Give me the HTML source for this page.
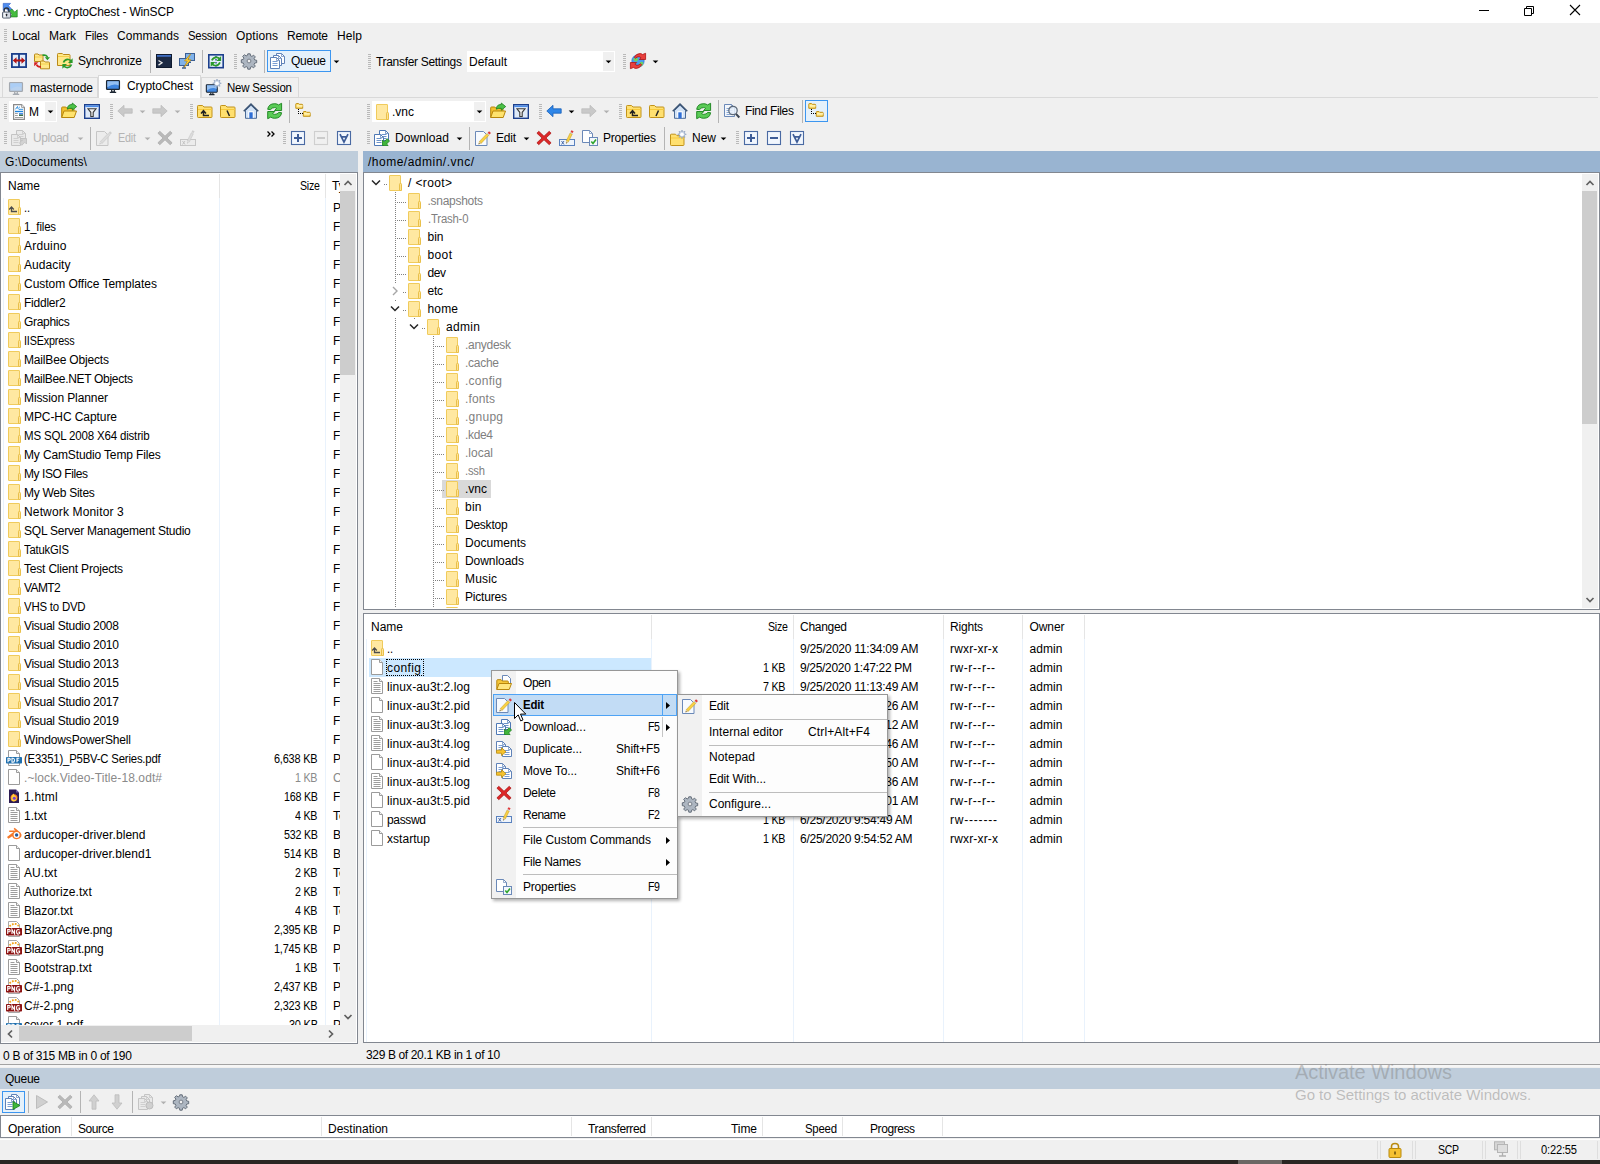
<!DOCTYPE html>
<html lang="en"><head><meta charset="utf-8"><title>.vnc - CryptoChest - WinSCP</title><style>html,body{margin:0;padding:0}body{width:1600px;height:1164px;position:relative;overflow:hidden;background:#f0f0f0;font-family:"Liberation Sans", sans-serif;font-size:12px;color:#000}div,span,svg{position:absolute}span{white-space:pre}svg{overflow:visible}</style></head>
<body>
<div style="left:0px;top:0px;width:1600px;height:23px;background:#fff;"></div>
<svg style="left:2px;top:3px" width="16" height="16" viewBox="0 0 17 17"><path d="M1.300 .4h7.700L6.800 2.900l4.200 4.200-2.800 2.800L4 5.700 1.300 8z" fill="#4d8df0" stroke="#2b5cc4" stroke-width=".7" stroke-linejoin="round"/><path d="M16.200 14.800V7.200l-2.600 2.500-3.300-3.300-2.800 2.800 3.300 3.300-2.500 2.300z" fill="#45bd3e" stroke="#1b7f1d" stroke-width=".7" stroke-linejoin="round"/><path d="M2.300 10V8q0-2.700 2.500-2.700T7.300 8v2" fill="none" stroke="#2d3440" stroke-width="1.500"/><rect x=".5" y="9.600" width="8.600" height="6.400" rx="1" fill="#d3d9e2" stroke="#4e5868"/><path d="M2 10.500h2v4.800h-2z" fill="#fff" opacity=".7"/><rect x="4.200" y="11.300" width="1.300" height="2.800" rx=".6" fill="#20242c"/></svg>
<span style="top:3.8px;line-height:16px;left:23px;letter-spacing:-0.17px;">.vnc - CryptoChest - WinSCP</span>
<svg style="left:1470px;top:0" width="130" height="23" viewBox="0 0 130 23"><path d="M9 10.500h10" stroke="#000" fill="none"/><path d="M54.500 8.500h7v7h-7zM56.500 8.500v-2h7v7h-2" stroke="#000" fill="none"/><path d="M100 5l10 10M110 5l-10 10" stroke="#000" fill="none" stroke-width="1.100"/></svg>
<div style="left:4px;top:29px;width:3px;height:14px;background:repeating-linear-gradient(#b9b9b9 0 1px,transparent 1px 2px)"></div>
<span style="top:27.8px;line-height:16px;left:12px;letter-spacing:-0.17px;">Local</span>
<span style="top:27.8px;line-height:16px;left:49px;letter-spacing:0.11px;">Mark</span>
<span style="top:27.8px;line-height:16px;left:85px;letter-spacing:-0.19px;transform:scaleX(0.9356);transform-origin:0 0;">Files</span>
<span style="top:27.8px;line-height:16px;left:117px;letter-spacing:0.09px;">Commands</span>
<span style="top:27.8px;line-height:16px;left:188px;letter-spacing:-0.21px;transform:scaleX(0.9415);transform-origin:0 0;">Session</span>
<span style="top:27.8px;line-height:16px;left:236px;letter-spacing:0.11px;">Options</span>
<span style="top:27.8px;line-height:16px;left:287px;letter-spacing:-0.21px;">Remote</span>
<span style="top:27.8px;line-height:16px;left:337px;letter-spacing:0.1px;">Help</span>
<div style="left:4px;top:54px;width:3px;height:16px;background:repeating-linear-gradient(#b9b9b9 0 1px,transparent 1px 2px)"></div>
<svg style="left:11px;top:53px" width="16" height="16" viewBox="0 0 16 16"><rect x=".9" y=".9" width="14.200" height="13.200" fill="#e2edfa" stroke="#1c3f8c" stroke-width="1.800"/><path d="M8 1v13" stroke="#1c3f8c" stroke-width="1.800"/><path d="M1.800 7.500l3.700-3.200v2.200h5V4.300l3.700 3.200-3.700 3.200V8.500h-5v2.200z" fill="#b31515"/></svg>
<svg style="left:34px;top:53px" width="16" height="16" viewBox="0 0 16 16"><path d="M0.5 1.8q0-.8.8-.8h2.7l1 1h3.2q.8 0 .8.800v5.7h-8.5z" fill="#ffe88a" stroke="#b9891a"/><path d="M1.0 4.0h7.5" stroke="#f6cf4a"/><path d="M6.5 8.8q0-.8.8-.8h2.9l1 1h3.5q.8 0 .8.800v6.000000000000001h-9z" fill="#ffe88a" stroke="#b9891a"/><path d="M7.0 11.0h8" stroke="#f6cf4a"/><path d="M8.500 2.200q4.500-.8 5 2.500" fill="none" stroke="#2a9a2a" stroke-width="1.700"/><path d="M10.800 4.200h5.200l-2.600 3z" fill="#2a9a2a"/><path d="M7 13.800q-3.500.4-4.500-2.300" fill="none" stroke="#d42020" stroke-width="1.700"/><path d="M.2 13.300V9.200h4.300z" fill="#d42020"/></svg>
<svg style="left:57px;top:53px" width="16" height="16" viewBox="0 0 16 16"><path d="M0.5 1.3q0-.8.8-.8h4.0l1 1h5.9q.8 0 .8.800v10.2h-12.5z" fill="#ffe88a" stroke="#b9891a"/><path d="M1.0 3.5h11.5" stroke="#f6cf4a"/><g transform="translate(5,5)"><path d="M1.500 4.500q1.500-3.500 5-3 1.800.3 2.800 1.700" fill="none" stroke="#2a9a2a" stroke-width="1.700"/><path d="M10.600 .2v4.800H6z" fill="#2a9a2a"/><path d="M9.500 6.500q-1.500 3.500-5 3-1.800-.3-2.800-1.700" fill="none" stroke="#2a9a2a" stroke-width="1.700"/><path d="M.4 10.800V6h4.600z" fill="#2a9a2a"/></g></svg>
<span style="top:53.1px;line-height:16px;left:78px;letter-spacing:-0.2px;">Synchronize</span>
<div style="left:150px;top:50px;width:1px;height:23px;background:#b4b4b4;"></div>
<svg style="left:156px;top:53px" width="16" height="16" viewBox="0 0 16 16"><rect x=".5" y="1.500" width="15" height="13" fill="#1c2a44" stroke="#0f1a2e"/><rect x="1" y="2" width="14" height="1.800" fill="#3e6cc0"/><path d="M2.500 7.500l3.500 2.300-3.500 2.300" fill="none" stroke="#e8e8e8" stroke-width="1.300"/></svg>
<svg style="left:179px;top:53px" width="16" height="16" viewBox="0 0 16 16"><rect x="6.500" y=".5" width="9" height="7" fill="#7fb2ea" stroke="#3b5f94"/><path d="M10 9.500h2M11 7.500v2" stroke="#3b5f94"/><rect x=".5" y="5.500" width="9" height="7" fill="#7fb2ea" stroke="#3b5f94"/><path d="M3 15h4M5 12.500v2.500" stroke="#3b5f94" stroke-width="1.300"/><path d="M11.500 1L5.500 8h2.800L5 14.500 12 6.800H9z" fill="#ffd23b" stroke="#b98a0e" stroke-width=".7"/></svg>
<div style="left:202px;top:50px;width:1px;height:23px;background:#b4b4b4;"></div>
<svg style="left:208px;top:53px" width="16" height="16" viewBox="0 0 16 16"><rect x=".8" y="1.800" width="14.400" height="12.900" fill="#e4eefa" stroke="#1c3f8c" stroke-width="1.600"/><path d="M8 3v11" stroke="#1c3f8c" stroke-dasharray="1.500 1.500" stroke-width="1.300"/><g transform="translate(2.300,2.800) scale(1.020)"><path d="M1.500 4.500q1.500-3.500 5-3 1.800.3 2.800 1.700" fill="none" stroke="#2a9a2a" stroke-width="1.700"/><path d="M10.600 .2v4.800H6z" fill="#2a9a2a"/><path d="M9.500 6.500q-1.500 3.500-5 3-1.800-.3-2.800-1.700" fill="none" stroke="#2a9a2a" stroke-width="1.700"/><path d="M.4 10.800V6h4.600z" fill="#2a9a2a"/></g></svg>
<div style="left:234px;top:54px;width:3px;height:16px;background:repeating-linear-gradient(#b9b9b9 0 1px,transparent 1px 2px)"></div>
<svg style="left:241px;top:53px" width="16" height="16" viewBox="0 0 16 16"><path d="M6.800.8h2.400l.4 2 1.300.6 1.700-1.200 1.700 1.700-1.200 1.700.6 1.300 2 .4v2.400l-2 .4-.6 1.300 1.200 1.700-1.700 1.700-1.700-1.200-1.300.6-.4 2H6.800l-.4-2-1.300-.6-1.700 1.200-1.700-1.700 1.200-1.700-.6-1.300-2-.4V6.800l2-.4.6-1.300L1.700 3.400l1.700-1.700 1.700 1.200 1.300-.6z" fill="#adb6c1" stroke="#59636f" stroke-width=".9"/><circle cx="8" cy="8" r="1.900" fill="#f0f0f0" stroke="#6d7580" stroke-width=".9"/></svg>
<div style="left:264px;top:50px;width:1px;height:23px;background:#b4b4b4;"></div>
<div style="left:267px;top:50px;width:64px;height:22px;background:#e5f1fb;border:1px solid #3c96f0;box-sizing:border-box;"></div>
<svg style="left:270px;top:53px" width="16" height="16" viewBox="0 0 16 16"><path d="M6.5 0.5h5l3 3v7h-8z" fill="#fff" stroke="#5f82b8"/><path d="M11.5 0.5v3h3" fill="none" stroke="#5f82b8" stroke-width=".7"/><path d="M3.5 2.5h5l3 3v7h-8z" fill="#fff" stroke="#5f82b8"/><path d="M8.5 2.5v3h3" fill="none" stroke="#5f82b8" stroke-width=".7"/><path d="M0.5 4.5h6l3 3v8h-9z" fill="#fff" stroke="#5f82b8"/><path d="M6.5 4.5v3h3" fill="none" stroke="#5f82b8" stroke-width=".7"/><path d="M2.5 8.5h5M2.5 10.5h5M2.5 12.5h5" stroke="#7c9fd3" fill="none"/></svg>
<span style="top:53.1px;line-height:16px;left:291px;letter-spacing:-0.26px;">Queue</span>
<svg style="left:333px;top:60px" width="7" height="4" viewBox="0 0 7 4"><path d="M.7 .4h5.600L3.500 3.300z" fill="#000"/></svg>
<div style="left:368px;top:54px;width:3px;height:16px;background:repeating-linear-gradient(#b9b9b9 0 1px,transparent 1px 2px)"></div>
<span style="top:53.8px;line-height:16px;left:376px;letter-spacing:-0.31px;">Transfer Settings</span>
<div style="left:467px;top:51px;width:148px;height:21px;background:#fff;"></div>
<div style="left:603px;top:52px;width:11px;height:19px;background:#f0f0f0;"></div>
<span style="top:53.8px;line-height:16px;left:469px;letter-spacing:-0.01px;">Default</span>
<svg style="left:605px;top:60px" width="7" height="4" viewBox="0 0 7 4"><path d="M.7 .4h5.600L3.500 3.300z" fill="#000"/></svg>
<div style="left:623px;top:54px;width:3px;height:16px;background:repeating-linear-gradient(#b9b9b9 0 1px,transparent 1px 2px)"></div>
<svg style="left:630px;top:53px" width="16" height="16" viewBox="0 0 16 16"><circle cx="8" cy="8" r="6.200" fill="#4a9cf0" stroke="#2a6fc4" stroke-width=".6"/><path d="M3 6.500q1.500-2.500 3.500-2t1.500 2.500-3 1.500zM9.500 9.500q2.500-1.500 3.500 0t-1 3.300-2.500-1z" fill="#6fd060"/><path d="M4.300 4.300Q6.300 .5 10 .6q1.400 0 2.600.9L15.600 .3V6.500H9.300l1.700-1.700Q10 3.700 8.800 3.700 6.800 3.700 5.600 5.300z" fill="#e8403c" stroke="#b01313" stroke-width=".8" stroke-linejoin="round"/><path d="M4.300 4.300Q6.300 .5 10 .6q1.400 0 2.600.9L15.600 .3V6.500H9.300l1.700-1.700Q10 3.700 8.800 3.700 6.800 3.700 5.600 5.300z" fill="#e8403c" stroke="#b01313" stroke-width=".8" stroke-linejoin="round" transform="rotate(180 8 8)"/></svg>
<svg style="left:652px;top:60px" width="7" height="4" viewBox="0 0 7 4"><path d="M.7 .4h5.600L3.500 3.300z" fill="#000"/></svg>
<div style="left:0px;top:97px;width:1598px;height:1px;background:#d9d9d9;"></div>
<div style="left:2px;top:77px;width:96px;height:21px;background:#f0f0f0;border:1px solid #d9d9d9;box-sizing:border-box;border-bottom:none;height:20px;"></div>
<svg style="left:8px;top:80px" width="16" height="16" viewBox="0 0 16 16"><g opacity="1"><rect x="1.600" y="2.600" width="12.800" height="8.800" rx=".7" fill="#b9d2ef" stroke="#a4a9b0" stroke-width="1.300"/><path d="M2.300 3.300h11.400v4.200q-5.400-2.600-11.400 1.800z" fill="#a9cdf6" opacity=".8"/><path d="M6.700 12v1.800h2.600V12M4.800 14.300h6.400" stroke="#a4a9b0" stroke-width="1.300" fill="none"/></g></svg>
<span style="top:79.8px;line-height:16px;left:30px;letter-spacing:-0.04px;">masternode</span>
<div style="left:201px;top:77px;width:98px;height:20px;background:#f0f0f0;border:1px solid #d9d9d9;box-sizing:border-box;border-bottom:none;"></div>
<svg style="left:205px;top:80px" width="16" height="16" viewBox="0 0 16 16"><g transform="translate(0,2.500) scale(.85)"><g opacity="1"><rect x="1.600" y="2.600" width="12.800" height="8.800" rx=".7" fill="#3f86e0" stroke="#1d2733" stroke-width="1.300"/><path d="M2.300 3.300h11.400v4.200q-5.400-2.600-11.400 1.800z" fill="#a9cdf6" opacity=".8"/><path d="M6.700 12v1.800h2.600V12M4.800 14.300h6.400" stroke="#1d2733" stroke-width="1.300" fill="none"/></g></g><path d="M12 -1l.8 2.200 2.200-.9-.9 2.200 2.200.8-2.200.8.900 2.200-2.200-.9L12 7.600l-.8-2.200-2.200.9.900-2.200L7.700 3.300l2.200-.8-.9-2.200 2.200.9z" fill="#dfe8f5" stroke="#7d93b5" stroke-width=".6"/><circle cx="12" cy="3.300" r="1.600" fill="#fff"/></svg>
<span style="top:79.8px;line-height:16px;left:227px;letter-spacing:-0.21px;transform:scaleX(0.9569);transform-origin:0 0;">New Session</span>
<div style="left:98px;top:75px;width:103px;height:23px;background:#fff;border:1px solid #d9d9d9;box-sizing:border-box;border-bottom:none;"></div>
<svg style="left:105px;top:78px" width="16" height="16" viewBox="0 0 16 16"><g opacity="1"><rect x="1.600" y="2.600" width="12.800" height="8.800" rx=".7" fill="#3f86e0" stroke="#1d2733" stroke-width="1.300"/><path d="M2.300 3.300h11.400v4.200q-5.400-2.600-11.400 1.800z" fill="#a9cdf6" opacity=".8"/><path d="M6.700 12v1.800h2.600V12M4.800 14.300h6.400" stroke="#1d2733" stroke-width="1.300" fill="none"/></g></svg>
<span style="top:77.8px;line-height:16px;left:127px;letter-spacing:-0.07px;">CryptoChest</span>
<div style="left:4px;top:104px;width:3px;height:16px;background:repeating-linear-gradient(#b9b9b9 0 1px,transparent 1px 2px)"></div>
<div style="left:9px;top:101px;width:48px;height:21px;background:#fff;"></div>
<div style="left:45px;top:102px;width:11px;height:19px;background:#f0f0f0;"></div>
<svg style="left:13px;top:104px" width="12" height="16" viewBox="0 0 12 16"><path d="M.6 .6h8l2.800 2.800v12H.6z" fill="#fff" stroke="#8a8a8a" stroke-width="1.200"/><path d="M8.600 .6v2.800h2.800" fill="#f4f4f4" stroke="#8a8a8a" stroke-width=".8"/><path d="M2.500 5.300L4.500 2.500l.8 2.800M6 3.200h.8M6 5.300h4" stroke="#2f8fe0" stroke-width="1" fill="none"/><path d="M2 7.500h8" stroke="#1f83dc" stroke-width="1.400"/><path d="M2 9.500h2.800M2 11.500h2.800M2 13.500h8" stroke="#a0a0a0"/><rect x="6" y="9" width="4" height="1.500" fill="#4a8df0"/><rect x="6" y="10.500" width="4" height="1.500" fill="#3a6e4a"/></svg>
<span style="top:103.8px;line-height:16px;left:29px;">M</span>
<svg style="left:47px;top:110px" width="7" height="4" viewBox="0 0 7 4"><path d="M.7 .4h5.600L3.500 3.300z" fill="#000"/></svg>
<svg style="left:61px;top:103px" width="16" height="16" viewBox="0 0 16 16"><path d="M.7 14.500V4.800q0-.8.8-.8h3.300l1.200 1.300h6.200q.8 0 .8.800V8" fill="#f2c12e" stroke="#b8860b"/><path d="M.7 14.500L3 8h12.500l-2.300 6.500z" fill="#ffe36e" stroke="#b8860b"/><path d="M6.300 6.200Q6.500 1.300 11.300 1.500V0l4.400 3.600-4.400 3.600V5.300Q8 5 6.300 6.200z" fill="#4cc148" stroke="#1b7f1d" stroke-width=".8" stroke-linejoin="round"/></svg>
<svg style="left:84px;top:103px" width="16" height="16" viewBox="0 0 16 16"><rect x=".7" y="1.700" width="14.600" height="13.600" fill="#dfeaf8" stroke="#1c3f8c" stroke-width="1.400"/><rect x="1.400" y="2.400" width="13.200" height="2" fill="#4a8ae6"/><rect x="1.400" y="4.400" width="13.200" height="1" fill="#f4f8fd"/><path d="M4 5.800h8L9.200 9.300v4.200H6.800V9.300z" fill="#f2f2f2" stroke="#3a3a3a" stroke-width="1.100"/></svg>
<div style="left:110px;top:104px;width:3px;height:16px;background:repeating-linear-gradient(#b9b9b9 0 1px,transparent 1px 2px)"></div>
<svg style="left:117px;top:103px" width="16" height="16" viewBox="0 0 16 16"><path d="M.8 8L7 2.300V5.800h8.200v4.400H7v3.500z" fill="#c9c9c9" stroke="#bdbdbd" stroke-width=".8"/></svg>
<svg style="left:139px;top:110px" width="7" height="4" viewBox="0 0 7 4"><path d="M.7 .4h5.600L3.500 3.300z" fill="#b0b0b0"/></svg>
<svg style="left:152px;top:103px" width="16" height="16" viewBox="0 0 16 16"><g transform="translate(16,0) scale(-1,1)"><path d="M.8 8L7 2.300V5.800h8.200v4.400H7v3.500z" fill="#c9c9c9" stroke="#bdbdbd" stroke-width=".8"/></g></svg>
<svg style="left:174px;top:110px" width="7" height="4" viewBox="0 0 7 4"><path d="M.7 .4h5.600L3.500 3.300z" fill="#b0b0b0"/></svg>
<div style="left:190px;top:104px;width:3px;height:16px;background:repeating-linear-gradient(#b9b9b9 0 1px,transparent 1px 2px)"></div>
<svg style="left:197px;top:103px" width="16" height="16" viewBox="0 0 16 16"><path d="M.5 3.300q0-.8.8-.8h4.200l1.500 1.500h7.200q.8 0 .8.800v8.900q0 .800-.8.800H1.300q-.8 0-.8-.8z" fill="#ffe070" stroke="#c2931a"/><path d="M1 6.500h14" stroke="#f7c93a"/><path d="M6.500 8.300v4.200h5.500M4 10.500l2.500-2.800 2.500 2.800" fill="none" stroke="#222" stroke-width="1.500"/></svg>
<svg style="left:220px;top:103px" width="16" height="16" viewBox="0 0 16 16"><path d="M.5 3.300q0-.8.8-.8h4.200l1.500 1.500h7.200q.8 0 .8.800v8.900q0 .800-.8.800H1.300q-.8 0-.8-.8z" fill="#ffe070" stroke="#c2931a"/><path d="M1 6.500h14" stroke="#f7c93a"/><path d="M7 7.500l2.500 5.500" stroke="#222" stroke-width="1.500"/></svg>
<svg style="left:243px;top:103px" width="16" height="16" viewBox="0 0 16 16"><path d="M2.500 7.500v7.800h11V7.500L8 2.200z" fill="#d3e3f6" stroke="#4a6a97"/><path d="M8 .1L.2 7.700l1.100 1.100L8 2.300l6.700 6.500 1.100-1.100z" fill="#3d5574"/><rect x="5.300" y="8.300" width="5.400" height="6.500" fill="#fff"/><rect x="6.300" y="9.300" width="3.400" height="6" fill="#2f6fd6"/></svg>
<svg style="left:267px;top:103px" width="16" height="16" viewBox="0 0 16 16"><path d="M.700 6.300Q1.400 .7 7.800 .7q2.200 0 3.700 1.200L14.600 .3V7.500H7.500l2.100-2.200Q8.800 4.600 7.600 4.600 4.900 4.600 3.500 6.600z" fill="#5acb56" stroke="#16811a" stroke-width=".9" stroke-linejoin="round"/><path d="M.700 6.300Q1.400 .7 7.800 .7q2.200 0 3.700 1.200L14.600 .3V7.500H7.500l2.100-2.200Q8.800 4.600 7.600 4.600 4.900 4.600 3.500 6.600z" fill="#5acb56" stroke="#16811a" stroke-width=".9" stroke-linejoin="round" transform="rotate(180 7.650 8)"/></svg>
<div style="left:289px;top:100px;width:1px;height:23px;background:#b4b4b4;"></div>
<svg style="left:295px;top:103px" width="16" height="16" viewBox="0 0 16 16"><g transform="translate(0,-1)"><path d="M.8 2.200q0-.7.700-.7h2l.8.800h2.700q.7 0 .7.700V6.300H.8z" fill="#ffe070" stroke="#c2931a"/><path d="M8.300 10.200q0-.7.700-.7h2l.8.800h2.700q.7 0 .7.700v3.300H8.300z" fill="#ffe070" stroke="#c2931a"/><path d="M1.600 3.800h6.100M9.100 11.800h6.100" stroke="#fff6c4" stroke-width="1.200"/><path d="M3 7h1v1h-1zM3 9h1v1h-1zM3 11h1v1h-1zM5 11h1v1h-1zM7 11h1v1h-1z" fill="#000"/></g></svg>
<div style="left:4px;top:131px;width:3px;height:14px;background:repeating-linear-gradient(#b9b9b9 0 1px,transparent 1px 2px)"></div>
<svg style="left:11px;top:130px" width="16" height="16" viewBox="0 0 16 16"><path d="M5.5 0.5h6l3 3v7h-9z" fill="#e9e9e9" stroke="#c4c4c4"/><path d="M11.5 0.5v3h3" fill="none" stroke="#c4c4c4" stroke-width=".7"/><path d="M7.5 4.5h5M7.5 6.5h5M7.5 8.5h5" stroke="#cfcfcf" fill="none"/><path d="M0.5 4.5h6l3 3v8h-9z" fill="#e9e9e9" stroke="#c4c4c4"/><path d="M6.5 4.5v3h3" fill="none" stroke="#c4c4c4" stroke-width=".7"/><path d="M2.5 8.5h5M2.5 10.5h5M2.5 12.5h5" stroke="#cfcfcf" fill="none"/><path d="M15.500 8.500v5.500l-1.700-1.700-3 3-2.300-2.300 3-3-1.700-1.500z" fill="#d2d2d2" stroke="#bdbdbd" stroke-width=".8" stroke-linejoin="round"/></svg>
<span style="top:129.8px;line-height:16px;left:33px;color:#b4b4b4;letter-spacing:-0.41px;">Upload</span>
<svg style="left:77px;top:137px" width="7" height="4" viewBox="0 0 7 4"><path d="M.7 .4h5.600L3.500 3.300z" fill="#b0b0b0"/></svg>
<div style="left:90px;top:127px;width:1px;height:23px;background:#b4b4b4;"></div>
<svg style="left:96px;top:130px" width="16" height="16" viewBox="0 0 16 16"><path d="M.5 1.500h8l3.500 3.500v10.500h-11.500z" fill="#ececec" stroke="#c6c6c6"/><path d="M6.33 13.21L13.88 5.27L11.99 3.48L4.45 11.42z" fill="#dcdcdc" stroke="#c2c2c2" stroke-width=".5"/><path d="M3.60 14.20L6.33 13.21L4.45 11.42z" fill="#e6e6e6" stroke="#c2c2c2" stroke-width=".3"/><path d="M3.60 14.20L4.75 13.78L3.96 13.03z" fill="#bdbdbd"/><path d="M13.88 5.27L14.57 4.55L12.68 2.75L11.99 3.48z" fill="#d6d6d6"/><path d="M14.57 4.55L15.94 3.10L14.06 1.30L12.68 2.75z" fill="#cfcfcf"/></svg>
<span style="top:129.8px;line-height:16px;left:118px;color:#b4b4b4;letter-spacing:-0.21px;transform:scaleX(0.897);transform-origin:0 0;">Edit</span>
<svg style="left:144px;top:137px" width="7" height="4" viewBox="0 0 7 4"><path d="M.7 .4h5.600L3.500 3.300z" fill="#b0b0b0"/></svg>
<svg style="left:157px;top:130px" width="16" height="16" viewBox="0 0 16 16"><path d="M2.800 1.300L8 6.200l5.200-4.900 1.900 1.900L10 8l5.100 4.800-1.900 1.900L8 9.800l-5.200 4.900-1.900-1.900L6 8 .9 3.200z" fill="#b9b9b9" stroke="#b0b0b0" stroke-width=".9"/></svg>
<svg style="left:180px;top:130px" width="16" height="16" viewBox="0 0 16 16"><rect x=".5" y="9.500" width="15" height="6" fill="#ececec" stroke="#c6c6c6"/><path d="M2.500 11l2.500 3.500M5 11l-2.500 3.500" stroke="#c0c0c0" stroke-width=".9"/><path d="M9.52 11.69L13.26 4.02L11.11 2.97L7.36 10.64z" fill="#dcdcdc" stroke="#c2c2c2" stroke-width=".5"/><path d="M7.30 13.50L9.52 11.69L7.36 10.64z" fill="#e6e6e6" stroke="#c2c2c2" stroke-width=".3"/><path d="M7.30 13.50L8.24 12.73L7.33 12.29z" fill="#bdbdbd"/><path d="M13.26 4.02L13.70 3.12L11.54 2.07L11.11 2.97z" fill="#d6d6d6"/><path d="M13.70 3.12L14.58 1.33L12.42 0.27L11.54 2.07z" fill="#cfcfcf"/></svg>
<svg style="left:267px;top:131px" width="9" height="6" viewBox="0 0 9 6"><path d="M.5 .5l2.500 2.500-2.500 2.500M4.500 .5l2.500 2.500-2.500 2.500" fill="none" stroke="#000" stroke-width="1.300"/></svg>
<div style="left:283px;top:131px;width:3px;height:14px;background:repeating-linear-gradient(#b9b9b9 0 1px,transparent 1px 2px)"></div>
<svg style="left:291px;top:131px" width="14" height="14" viewBox="0 0 14 14"><rect x=".5" y=".5" width="13" height="13" fill="#f1f6fd" stroke="#4a6aa3" stroke-width="1.100"/><path d="M3 7h8M7 3v8" stroke="#3d5c97" stroke-width="2"/></svg>
<svg style="left:314px;top:131px" width="14" height="14" viewBox="0 0 14 14"><rect x=".5" y=".5" width="13" height="13" fill="#f0f0f0" stroke="#cfcfcf" stroke-width="1.100"/><path d="M3 7h8" stroke="#cbcbcb" stroke-width="2"/></svg>
<svg style="left:337px;top:131px" width="14" height="14" viewBox="0 0 14 14"><rect x=".5" y=".5" width="13" height="13" fill="#f1f6fd" stroke="#4a6aa3" stroke-width="1.100"/><path d="M3 3.200l4 8 4-8M4.300 5.800h5.400" fill="none" stroke="#3d5c97" stroke-width="1.700"/></svg>
<div style="left:367px;top:104px;width:3px;height:16px;background:repeating-linear-gradient(#b9b9b9 0 1px,transparent 1px 2px)"></div>
<div style="left:372px;top:101px;width:114px;height:21px;background:#fff;"></div>
<div style="left:474px;top:102px;width:11px;height:19px;background:#f0f0f0;"></div>
<svg style="left:376px;top:104px" width="13" height="16" viewBox="0 0 13 16"><rect x=".5" y=".5" width="11" height="15" rx=".3" fill="#ffe8a1" stroke="#f0cb5c"/><path d="M10.500 15.500v-6.200q0-.8.7-.8h.6q.7 0 .7.8v6.200z" fill="#ffe294" stroke="#e9c04a"/></svg>
<span style="top:103.8px;line-height:16px;left:392px;letter-spacing:-0.01px;">.vnc</span>
<svg style="left:476px;top:110px" width="7" height="4" viewBox="0 0 7 4"><path d="M.7 .4h5.600L3.500 3.300z" fill="#000"/></svg>
<svg style="left:490px;top:103px" width="16" height="16" viewBox="0 0 16 16"><path d="M.7 14.500V4.800q0-.8.8-.8h3.300l1.200 1.300h6.200q.8 0 .8.800V8" fill="#f2c12e" stroke="#b8860b"/><path d="M.7 14.500L3 8h12.500l-2.300 6.500z" fill="#ffe36e" stroke="#b8860b"/><path d="M6.300 6.200Q6.500 1.300 11.300 1.500V0l4.400 3.600-4.400 3.600V5.300Q8 5 6.300 6.200z" fill="#4cc148" stroke="#1b7f1d" stroke-width=".8" stroke-linejoin="round"/></svg>
<svg style="left:513px;top:103px" width="16" height="16" viewBox="0 0 16 16"><rect x=".7" y="1.700" width="14.600" height="13.600" fill="#dfeaf8" stroke="#1c3f8c" stroke-width="1.400"/><rect x="1.400" y="2.400" width="13.200" height="2" fill="#4a8ae6"/><rect x="1.400" y="4.400" width="13.200" height="1" fill="#f4f8fd"/><path d="M4 5.800h8L9.200 9.300v4.200H6.800V9.300z" fill="#f2f2f2" stroke="#3a3a3a" stroke-width="1.100"/></svg>
<div style="left:539px;top:104px;width:3px;height:16px;background:repeating-linear-gradient(#b9b9b9 0 1px,transparent 1px 2px)"></div>
<svg style="left:546px;top:103px" width="16" height="16" viewBox="0 0 16 16"><path d="M.8 8L7 2.300V5.800h8.200v4.400H7v3.500z" fill="#2f86e8" stroke="#1b5fb8" stroke-width=".8"/></svg>
<svg style="left:568px;top:110px" width="7" height="4" viewBox="0 0 7 4"><path d="M.7 .4h5.600L3.500 3.300z" fill="#000"/></svg>
<svg style="left:581px;top:103px" width="16" height="16" viewBox="0 0 16 16"><g transform="translate(16,0) scale(-1,1)"><path d="M.8 8L7 2.300V5.800h8.200v4.400H7v3.500z" fill="#c9c9c9" stroke="#bdbdbd" stroke-width=".8"/></g></svg>
<svg style="left:603px;top:110px" width="7" height="4" viewBox="0 0 7 4"><path d="M.7 .4h5.600L3.500 3.300z" fill="#b0b0b0"/></svg>
<div style="left:619px;top:104px;width:3px;height:16px;background:repeating-linear-gradient(#b9b9b9 0 1px,transparent 1px 2px)"></div>
<svg style="left:626px;top:103px" width="16" height="16" viewBox="0 0 16 16"><path d="M.5 3.300q0-.8.8-.8h4.200l1.500 1.500h7.200q.8 0 .8.800v8.900q0 .800-.8.800H1.300q-.8 0-.8-.8z" fill="#ffe070" stroke="#c2931a"/><path d="M1 6.500h14" stroke="#f7c93a"/><path d="M6.500 8.300v4.200h5.500M4 10.500l2.500-2.800 2.500 2.800" fill="none" stroke="#222" stroke-width="1.500"/></svg>
<svg style="left:649px;top:103px" width="16" height="16" viewBox="0 0 16 16"><path d="M.5 3.300q0-.8.8-.8h4.200l1.500 1.500h7.200q.8 0 .8.800v8.900q0 .800-.8.800H1.300q-.8 0-.8-.8z" fill="#ffe070" stroke="#c2931a"/><path d="M1 6.500h14" stroke="#f7c93a"/><path d="M9.500 7.500l-2.500 5.500" stroke="#222" stroke-width="1.500"/></svg>
<svg style="left:672px;top:103px" width="16" height="16" viewBox="0 0 16 16"><path d="M2.500 7.500v7.800h11V7.500L8 2.200z" fill="#d3e3f6" stroke="#4a6a97"/><path d="M8 .1L.2 7.700l1.100 1.100L8 2.300l6.700 6.500 1.100-1.100z" fill="#3d5574"/><rect x="5.300" y="8.300" width="5.400" height="6.500" fill="#fff"/><rect x="6.300" y="9.300" width="3.400" height="6" fill="#2f6fd6"/></svg>
<svg style="left:696px;top:103px" width="16" height="16" viewBox="0 0 16 16"><path d="M.700 6.300Q1.400 .7 7.800 .7q2.200 0 3.700 1.200L14.600 .3V7.500H7.500l2.100-2.200Q8.800 4.600 7.600 4.600 4.900 4.600 3.500 6.600z" fill="#5acb56" stroke="#16811a" stroke-width=".9" stroke-linejoin="round"/><path d="M.700 6.300Q1.400 .7 7.800 .7q2.200 0 3.700 1.200L14.600 .3V7.500H7.500l2.100-2.200Q8.800 4.600 7.600 4.600 4.900 4.600 3.500 6.600z" fill="#5acb56" stroke="#16811a" stroke-width=".9" stroke-linejoin="round" transform="rotate(180 7.650 8)"/></svg>
<div style="left:718px;top:100px;width:1px;height:23px;background:#b4b4b4;"></div>
<svg style="left:724px;top:103px" width="16" height="16" viewBox="0 0 16 16"><path d="M0.5 1.5h7l3 3v9h-10z" fill="#f3f7fc" stroke="#6b89b8"/><path d="M7.5 1.5v3h3" fill="none" stroke="#6b89b8" stroke-width=".7"/><path d="M2.5 5.5h6M2.5 7.5h6M2.5 9.5h6M2.5 11.5h6" stroke="#8aa9d6" fill="none"/><circle cx="9" cy="7.500" r="4.200" fill="#e8f1fb" fill-opacity=".85" stroke="#5f6b7a" stroke-width="1.300"/><path d="M12 10.800l3.300 3.700" stroke="#3d4653" stroke-width="2"/></svg>
<span style="top:103.3px;line-height:16px;left:745px;letter-spacing:-0.34px;">Find Files</span>
<div style="left:802px;top:100px;width:1px;height:23px;background:#b4b4b4;"></div>
<div style="left:805px;top:100px;width:23px;height:22px;background:#e5f1fb;border:1px solid #3c96f0;box-sizing:border-box;"></div>
<svg style="left:808px;top:103px" width="16" height="16" viewBox="0 0 16 16"><g transform="translate(0,-1)"><path d="M.8 2.200q0-.7.700-.7h2l.8.800h2.700q.7 0 .7.700V6.300H.8z" fill="#ffe070" stroke="#c2931a"/><path d="M8.300 10.200q0-.7.700-.7h2l.8.800h2.700q.7 0 .7.700v3.300H8.300z" fill="#ffe070" stroke="#c2931a"/><path d="M1.600 3.800h6.100M9.100 11.800h6.100" stroke="#fff6c4" stroke-width="1.200"/><path d="M3 7h1v1h-1zM3 9h1v1h-1zM3 11h1v1h-1zM5 11h1v1h-1zM7 11h1v1h-1z" fill="#000"/></g></svg>
<div style="left:367px;top:131px;width:3px;height:14px;background:repeating-linear-gradient(#b9b9b9 0 1px,transparent 1px 2px)"></div>
<svg style="left:374px;top:130px" width="16" height="16" viewBox="0 0 16 16"><path d="M5.5 0.5h6l3 3v7h-9z" fill="#fff" stroke="#4e78b5"/><path d="M11.5 0.5v3h3" fill="none" stroke="#4e78b5" stroke-width=".7"/><path d="M7.5 4.5h5M7.5 6.5h5M7.5 8.5h5" stroke="#6d93c9" fill="none"/><path d="M0.5 4.5h6l3 3v8h-9z" fill="#fff" stroke="#4e78b5"/><path d="M6.5 4.5v3h3" fill="none" stroke="#4e78b5" stroke-width=".7"/><path d="M2.5 8.5h5M2.5 10.5h5M2.5 12.5h5" stroke="#6d93c9" fill="none"/><path d="M8.500 15.500v-5.500l1.700 1.700 3-3 2.300 2.300-3 3 1.700 1.500z" fill="#3fb63a" stroke="#1b7f1d" stroke-width=".8" stroke-linejoin="round"/></svg>
<span style="top:129.8px;line-height:16px;left:395px;letter-spacing:0.09px;">Download</span>
<svg style="left:456px;top:137px" width="7" height="4" viewBox="0 0 7 4"><path d="M.7 .4h5.600L3.500 3.300z" fill="#000"/></svg>
<div style="left:469px;top:127px;width:1px;height:23px;background:#b4b4b4;"></div>
<svg style="left:475px;top:130px" width="16" height="16" viewBox="0 0 16 16"><path d="M.5 1.500h8l3.500 3.500v10.500h-11.500z" fill="#f7fafe" stroke="#6b89b8"/><path d="M6.33 13.21L13.88 5.27L11.99 3.48L4.45 11.42z" fill="#f8d043" stroke="#c39a1f" stroke-width=".5"/><path d="M3.60 14.20L6.33 13.21L4.45 11.42z" fill="#f0d9a8" stroke="#c39a1f" stroke-width=".3"/><path d="M3.60 14.20L4.75 13.78L3.96 13.03z" fill="#3a3a3a"/><path d="M13.88 5.27L14.57 4.55L12.68 2.75L11.99 3.48z" fill="#c9ced6"/><path d="M14.57 4.55L15.94 3.10L14.06 1.30L12.68 2.75z" fill="#e03a3a"/></svg>
<span style="top:129.8px;line-height:16px;left:496px;letter-spacing:-0.23px;">Edit</span>
<svg style="left:523px;top:137px" width="7" height="4" viewBox="0 0 7 4"><path d="M.7 .4h5.600L3.500 3.300z" fill="#000"/></svg>
<svg style="left:536px;top:130px" width="16" height="16" viewBox="0 0 16 16"><path d="M2.800 1.300L8 6.200l5.200-4.900 1.900 1.900L10 8l5.100 4.800-1.900 1.900L8 9.800l-5.200 4.900-1.900-1.900L6 8 .9 3.200z" fill="#dc2828" stroke="#a81212" stroke-width=".7"/></svg>
<svg style="left:559px;top:130px" width="16" height="16" viewBox="0 0 16 16"><rect x=".5" y="9.500" width="15" height="6" fill="#eef4fc" stroke="#5a82bf"/><path d="M2.500 11l2.500 3.500M5 11l-2.500 3.500" stroke="#3a5fa0" stroke-width=".9"/><path d="M9.52 11.69L13.26 4.02L11.11 2.97L7.36 10.64z" fill="#f8d043" stroke="#c39a1f" stroke-width=".5"/><path d="M7.30 13.50L9.52 11.69L7.36 10.64z" fill="#f0d9a8" stroke="#c39a1f" stroke-width=".3"/><path d="M7.30 13.50L8.24 12.73L7.33 12.29z" fill="#3a3a3a"/><path d="M13.26 4.02L13.70 3.12L11.54 2.07L11.11 2.97z" fill="#c9ced6"/><path d="M13.70 3.12L14.58 1.33L12.42 0.27L11.54 2.07z" fill="#e03a3a"/></svg>
<svg style="left:582px;top:130px" width="16" height="16" viewBox="0 0 16 16"><path d="M0.5 0.5h7l3 3v9h-10z" fill="#fff" stroke="#6b89b8"/><path d="M7.5 0.5v3h3" fill="none" stroke="#6b89b8" stroke-width=".7"/><rect x="7.500" y="7.500" width="8" height="8" fill="#f4f8fd" stroke="#6b89b8"/><path d="M9.300 11.500l1.700 2 3-4" fill="none" stroke="#2fa52c" stroke-width="1.600"/></svg>
<span style="top:129.8px;line-height:16px;left:603px;letter-spacing:-0.19px;">Properties</span>
<div style="left:664px;top:127px;width:1px;height:23px;background:#b4b4b4;"></div>
<svg style="left:670px;top:130px" width="16" height="16" viewBox="0 0 16 16"><path d="M.5 5q0-.8.8-.8h4.200l1.500 1.500h6.200q.8 0 .8.800v8.200q0 .800-.8.800H1.300q-.8 0-.8-.8z" fill="#ffe070" stroke="#c2931a"/><path d="M1 8h13" stroke="#f7c93a"/><path d="M12 0l.8 2.200 2.200-.9-.9 2.200 2.200.8-2.200.8.900 2.200-2.200-.9L12 8.600l-.8-2.200-2.200.9.900-2.200L7.700 4.300l2.200-.8-.9-2.200 2.200.9z" fill="#dfe8f5" stroke="#7d93b5" stroke-width=".6"/><circle cx="12" cy="4.300" r="1.600" fill="#fff"/></svg>
<span style="top:129.8px;line-height:16px;left:692px;letter-spacing:-0.01px;">New</span>
<svg style="left:720px;top:137px" width="7" height="4" viewBox="0 0 7 4"><path d="M.7 .4h5.600L3.500 3.300z" fill="#000"/></svg>
<div style="left:736px;top:131px;width:3px;height:14px;background:repeating-linear-gradient(#b9b9b9 0 1px,transparent 1px 2px)"></div>
<svg style="left:744px;top:131px" width="14" height="14" viewBox="0 0 14 14"><rect x=".5" y=".5" width="13" height="13" fill="#f1f6fd" stroke="#4a6aa3" stroke-width="1.100"/><path d="M3 7h8M7 3v8" stroke="#3d5c97" stroke-width="2"/></svg>
<svg style="left:767px;top:131px" width="14" height="14" viewBox="0 0 14 14"><rect x=".5" y=".5" width="13" height="13" fill="#f1f6fd" stroke="#4a6aa3" stroke-width="1.100"/><path d="M3 7h8" stroke="#3d5c97" stroke-width="2"/></svg>
<svg style="left:790px;top:131px" width="14" height="14" viewBox="0 0 14 14"><rect x=".5" y=".5" width="13" height="13" fill="#f1f6fd" stroke="#4a6aa3" stroke-width="1.100"/><path d="M3 3.200l4 8 4-8M4.300 5.800h5.400" fill="none" stroke="#3d5c97" stroke-width="1.700"/></svg>
<div style="left:0px;top:151px;width:358px;height:21px;background:#bfcddb;"></div>
<span style="top:153.8px;line-height:16px;left:5px;letter-spacing:0.16px;">G:\Documents\</span>
<div style="left:363px;top:151px;width:1237px;height:21px;background:#99b4d1;"></div>
<span style="top:153.8px;line-height:16px;left:368px;letter-spacing:0.5px;">/home/admin/.vnc/</span>
<div style="left:0px;top:172px;width:358px;height:872px;background:#fff;border:1px solid #828790;box-sizing:border-box;"></div>
<div style="left:1px;top:173px;width:339px;height:852px;overflow:hidden">
<div style="left:218px;top:25px;width:1px;height:830px;background:#e9f2fc;"></div>
<div style="left:324px;top:25px;width:1px;height:830px;background:#e9f2fc;"></div>
<div style="left:2px;top:25px;width:1px;height:830px;background:#e9f2fc;"></div>
<div style="left:218px;top:1px;width:1px;height:24px;background:#e5e5e5;"></div>
<div style="left:324px;top:1px;width:1px;height:24px;background:#e5e5e5;"></div>
<span style="top:4.8px;line-height:16px;left:7px;letter-spacing:-0.01px;">Name</span>
<span style="top:4.8px;line-height:16px;left:299px;letter-spacing:-0.23px;transform:scaleX(0.8833);transform-origin:0 0;">Size</span>
<span style="top:4.8px;line-height:16px;left:331px;">Type</span>
<svg style="left:7px;top:26px" width="13" height="16" viewBox="0 0 13 16"><rect x=".5" y=".5" width="11" height="15" rx=".3" fill="#ffe8a1" stroke="#f0cb5c"/><path d="M10.500 15.500v-6.200q0-.8.7-.8h.6q.7 0 .7.8v6.200z" fill="#ffe294" stroke="#e9c04a"/><path d="M3.500 8.300v4.200h5.500M1.200 10.500l2.300-2.600 2.300 2.600" fill="none" stroke="#4d4d4d" stroke-width="1.300"/></svg>
<span style="top:27.3px;line-height:16px;left:23px;letter-spacing:-0.2px;transform:scaleX(0.9271);transform-origin:0 0;">..</span>
<span style="top:27.3px;line-height:16px;left:332px;">Parent directory</span>
<svg style="left:7px;top:45px" width="13" height="16" viewBox="0 0 13 16"><rect x=".5" y=".5" width="11" height="15" rx=".3" fill="#ffe8a1" stroke="#f0cb5c"/><path d="M10.500 15.500v-6.200q0-.8.7-.8h.6q.7 0 .7.8v6.200z" fill="#ffe294" stroke="#e9c04a"/></svg>
<span style="top:46.3px;line-height:16px;left:23px;letter-spacing:-0.17px;transform:scaleX(0.9511);transform-origin:0 0;">1_files</span>
<span style="top:46.3px;line-height:16px;left:332px;">File folder</span>
<svg style="left:7px;top:64px" width="13" height="16" viewBox="0 0 13 16"><rect x=".5" y=".5" width="11" height="15" rx=".3" fill="#ffe8a1" stroke="#f0cb5c"/><path d="M10.500 15.500v-6.200q0-.8.7-.8h.6q.7 0 .7.8v6.200z" fill="#ffe294" stroke="#e9c04a"/></svg>
<span style="top:65.3px;line-height:16px;left:23px;letter-spacing:0.19px;">Arduino</span>
<span style="top:65.3px;line-height:16px;left:332px;">File folder</span>
<svg style="left:7px;top:83px" width="13" height="16" viewBox="0 0 13 16"><rect x=".5" y=".5" width="11" height="15" rx=".3" fill="#ffe8a1" stroke="#f0cb5c"/><path d="M10.500 15.500v-6.200q0-.8.7-.8h.6q.7 0 .7.8v6.200z" fill="#ffe294" stroke="#e9c04a"/></svg>
<span style="top:84.3px;line-height:16px;left:23px;letter-spacing:0.07px;">Audacity</span>
<span style="top:84.3px;line-height:16px;left:332px;">File folder</span>
<svg style="left:7px;top:102px" width="13" height="16" viewBox="0 0 13 16"><rect x=".5" y=".5" width="11" height="15" rx=".3" fill="#ffe8a1" stroke="#f0cb5c"/><path d="M10.500 15.500v-6.200q0-.8.7-.8h.6q.7 0 .7.8v6.200z" fill="#ffe294" stroke="#e9c04a"/></svg>
<span style="top:103.3px;line-height:16px;left:23px;letter-spacing:-0.03px;">Custom Office Templates</span>
<span style="top:103.3px;line-height:16px;left:332px;">File folder</span>
<svg style="left:7px;top:121px" width="13" height="16" viewBox="0 0 13 16"><rect x=".5" y=".5" width="11" height="15" rx=".3" fill="#ffe8a1" stroke="#f0cb5c"/><path d="M10.500 15.500v-6.200q0-.8.7-.8h.6q.7 0 .7.8v6.200z" fill="#ffe294" stroke="#e9c04a"/></svg>
<span style="top:122.3px;line-height:16px;left:23px;letter-spacing:-0.24px;">Fiddler2</span>
<span style="top:122.3px;line-height:16px;left:332px;">File folder</span>
<svg style="left:7px;top:140px" width="13" height="16" viewBox="0 0 13 16"><rect x=".5" y=".5" width="11" height="15" rx=".3" fill="#ffe8a1" stroke="#f0cb5c"/><path d="M10.500 15.500v-6.200q0-.8.7-.8h.6q.7 0 .7.8v6.200z" fill="#ffe294" stroke="#e9c04a"/></svg>
<span style="top:141.3px;line-height:16px;left:23px;letter-spacing:-0.32px;">Graphics</span>
<span style="top:141.3px;line-height:16px;left:332px;">File folder</span>
<svg style="left:7px;top:159px" width="13" height="16" viewBox="0 0 13 16"><rect x=".5" y=".5" width="11" height="15" rx=".3" fill="#ffe8a1" stroke="#f0cb5c"/><path d="M10.500 15.500v-6.200q0-.8.7-.8h.6q.7 0 .7.8v6.200z" fill="#ffe294" stroke="#e9c04a"/></svg>
<span style="top:160.3px;line-height:16px;left:23px;letter-spacing:-0.19px;transform:scaleX(0.9007);transform-origin:0 0;">IISExpress</span>
<span style="top:160.3px;line-height:16px;left:332px;">File folder</span>
<svg style="left:7px;top:178px" width="13" height="16" viewBox="0 0 13 16"><rect x=".5" y=".5" width="11" height="15" rx=".3" fill="#ffe8a1" stroke="#f0cb5c"/><path d="M10.500 15.500v-6.200q0-.8.7-.8h.6q.7 0 .7.8v6.200z" fill="#ffe294" stroke="#e9c04a"/></svg>
<span style="top:179.3px;line-height:16px;left:23px;letter-spacing:-0.17px;">MailBee Objects</span>
<span style="top:179.3px;line-height:16px;left:332px;">File folder</span>
<svg style="left:7px;top:197px" width="13" height="16" viewBox="0 0 13 16"><rect x=".5" y=".5" width="11" height="15" rx=".3" fill="#ffe8a1" stroke="#f0cb5c"/><path d="M10.500 15.500v-6.200q0-.8.7-.8h.6q.7 0 .7.8v6.200z" fill="#ffe294" stroke="#e9c04a"/></svg>
<span style="top:198.3px;line-height:16px;left:23px;letter-spacing:-0.31px;">MailBee.NET Objects</span>
<span style="top:198.3px;line-height:16px;left:332px;">File folder</span>
<svg style="left:7px;top:216px" width="13" height="16" viewBox="0 0 13 16"><rect x=".5" y=".5" width="11" height="15" rx=".3" fill="#ffe8a1" stroke="#f0cb5c"/><path d="M10.500 15.500v-6.200q0-.8.7-.8h.6q.7 0 .7.8v6.200z" fill="#ffe294" stroke="#e9c04a"/></svg>
<span style="top:217.3px;line-height:16px;left:23px;letter-spacing:-0.1px;">Mission Planner</span>
<span style="top:217.3px;line-height:16px;left:332px;">File folder</span>
<svg style="left:7px;top:235px" width="13" height="16" viewBox="0 0 13 16"><rect x=".5" y=".5" width="11" height="15" rx=".3" fill="#ffe8a1" stroke="#f0cb5c"/><path d="M10.500 15.500v-6.200q0-.8.7-.8h.6q.7 0 .7.8v6.200z" fill="#ffe294" stroke="#e9c04a"/></svg>
<span style="top:236.3px;line-height:16px;left:23px;letter-spacing:-0.08px;">MPC-HC Capture</span>
<span style="top:236.3px;line-height:16px;left:332px;">File folder</span>
<svg style="left:7px;top:254px" width="13" height="16" viewBox="0 0 13 16"><rect x=".5" y=".5" width="11" height="15" rx=".3" fill="#ffe8a1" stroke="#f0cb5c"/><path d="M10.500 15.500v-6.200q0-.8.7-.8h.6q.7 0 .7.8v6.200z" fill="#ffe294" stroke="#e9c04a"/></svg>
<span style="top:255.3px;line-height:16px;left:23px;letter-spacing:-0.18px;transform:scaleX(0.9586);transform-origin:0 0;">MS SQL 2008 X64 distrib</span>
<span style="top:255.3px;line-height:16px;left:332px;">File folder</span>
<svg style="left:7px;top:273px" width="13" height="16" viewBox="0 0 13 16"><rect x=".5" y=".5" width="11" height="15" rx=".3" fill="#ffe8a1" stroke="#f0cb5c"/><path d="M10.500 15.500v-6.200q0-.8.7-.8h.6q.7 0 .7.8v6.200z" fill="#ffe294" stroke="#e9c04a"/></svg>
<span style="top:274.3px;line-height:16px;left:23px;letter-spacing:-0.14px;">My CamStudio Temp Files</span>
<span style="top:274.3px;line-height:16px;left:332px;">File folder</span>
<svg style="left:7px;top:292px" width="13" height="16" viewBox="0 0 13 16"><rect x=".5" y=".5" width="11" height="15" rx=".3" fill="#ffe8a1" stroke="#f0cb5c"/><path d="M10.500 15.500v-6.200q0-.8.7-.8h.6q.7 0 .7.8v6.200z" fill="#ffe294" stroke="#e9c04a"/></svg>
<span style="top:293.3px;line-height:16px;left:23px;letter-spacing:-0.43px;">My ISO Files</span>
<span style="top:293.3px;line-height:16px;left:332px;">File folder</span>
<svg style="left:7px;top:311px" width="13" height="16" viewBox="0 0 13 16"><rect x=".5" y=".5" width="11" height="15" rx=".3" fill="#ffe8a1" stroke="#f0cb5c"/><path d="M10.500 15.500v-6.200q0-.8.7-.8h.6q.7 0 .7.8v6.200z" fill="#ffe294" stroke="#e9c04a"/></svg>
<span style="top:312.3px;line-height:16px;left:23px;letter-spacing:-0.27px;">My Web Sites</span>
<span style="top:312.3px;line-height:16px;left:332px;">File folder</span>
<svg style="left:7px;top:330px" width="13" height="16" viewBox="0 0 13 16"><rect x=".5" y=".5" width="11" height="15" rx=".3" fill="#ffe8a1" stroke="#f0cb5c"/><path d="M10.500 15.500v-6.200q0-.8.7-.8h.6q.7 0 .7.8v6.200z" fill="#ffe294" stroke="#e9c04a"/></svg>
<span style="top:331.3px;line-height:16px;left:23px;letter-spacing:0.15px;">Network Monitor 3</span>
<span style="top:331.3px;line-height:16px;left:332px;">File folder</span>
<svg style="left:7px;top:349px" width="13" height="16" viewBox="0 0 13 16"><rect x=".5" y=".5" width="11" height="15" rx=".3" fill="#ffe8a1" stroke="#f0cb5c"/><path d="M10.500 15.500v-6.200q0-.8.7-.8h.6q.7 0 .7.8v6.200z" fill="#ffe294" stroke="#e9c04a"/></svg>
<span style="top:350.3px;line-height:16px;left:23px;letter-spacing:-0.23px;">SQL Server Management Studio</span>
<span style="top:350.3px;line-height:16px;left:332px;">File folder</span>
<svg style="left:7px;top:368px" width="13" height="16" viewBox="0 0 13 16"><rect x=".5" y=".5" width="11" height="15" rx=".3" fill="#ffe8a1" stroke="#f0cb5c"/><path d="M10.500 15.500v-6.200q0-.8.7-.8h.6q.7 0 .7.8v6.200z" fill="#ffe294" stroke="#e9c04a"/></svg>
<span style="top:369.3px;line-height:16px;left:23px;letter-spacing:-0.21px;transform:scaleX(0.9399);transform-origin:0 0;">TatukGIS</span>
<span style="top:369.3px;line-height:16px;left:332px;">File folder</span>
<svg style="left:7px;top:387px" width="13" height="16" viewBox="0 0 13 16"><rect x=".5" y=".5" width="11" height="15" rx=".3" fill="#ffe8a1" stroke="#f0cb5c"/><path d="M10.500 15.500v-6.200q0-.8.7-.8h.6q.7 0 .7.8v6.200z" fill="#ffe294" stroke="#e9c04a"/></svg>
<span style="top:388.3px;line-height:16px;left:23px;letter-spacing:-0.19px;">Test Client Projects</span>
<span style="top:388.3px;line-height:16px;left:332px;">File folder</span>
<svg style="left:7px;top:406px" width="13" height="16" viewBox="0 0 13 16"><rect x=".5" y=".5" width="11" height="15" rx=".3" fill="#ffe8a1" stroke="#f0cb5c"/><path d="M10.500 15.500v-6.200q0-.8.7-.8h.6q.7 0 .7.8v6.200z" fill="#ffe294" stroke="#e9c04a"/></svg>
<span style="top:407.3px;line-height:16px;left:23px;letter-spacing:-0.58px;">VAMT2</span>
<span style="top:407.3px;line-height:16px;left:332px;">File folder</span>
<svg style="left:7px;top:425px" width="13" height="16" viewBox="0 0 13 16"><rect x=".5" y=".5" width="11" height="15" rx=".3" fill="#ffe8a1" stroke="#f0cb5c"/><path d="M10.500 15.500v-6.200q0-.8.7-.8h.6q.7 0 .7.8v6.200z" fill="#ffe294" stroke="#e9c04a"/></svg>
<span style="top:426.3px;line-height:16px;left:23px;letter-spacing:-0.22px;transform:scaleX(0.9523);transform-origin:0 0;">VHS to DVD</span>
<span style="top:426.3px;line-height:16px;left:332px;">File folder</span>
<svg style="left:7px;top:444px" width="13" height="16" viewBox="0 0 13 16"><rect x=".5" y=".5" width="11" height="15" rx=".3" fill="#ffe8a1" stroke="#f0cb5c"/><path d="M10.500 15.500v-6.200q0-.8.7-.8h.6q.7 0 .7.8v6.200z" fill="#ffe294" stroke="#e9c04a"/></svg>
<span style="top:445.3px;line-height:16px;left:23px;letter-spacing:-0.29px;">Visual Studio 2008</span>
<span style="top:445.3px;line-height:16px;left:332px;">File folder</span>
<svg style="left:7px;top:463px" width="13" height="16" viewBox="0 0 13 16"><rect x=".5" y=".5" width="11" height="15" rx=".3" fill="#ffe8a1" stroke="#f0cb5c"/><path d="M10.500 15.500v-6.200q0-.8.7-.8h.6q.7 0 .7.8v6.200z" fill="#ffe294" stroke="#e9c04a"/></svg>
<span style="top:464.3px;line-height:16px;left:23px;letter-spacing:-0.29px;">Visual Studio 2010</span>
<span style="top:464.3px;line-height:16px;left:332px;">File folder</span>
<svg style="left:7px;top:482px" width="13" height="16" viewBox="0 0 13 16"><rect x=".5" y=".5" width="11" height="15" rx=".3" fill="#ffe8a1" stroke="#f0cb5c"/><path d="M10.500 15.500v-6.200q0-.8.7-.8h.6q.7 0 .7.8v6.200z" fill="#ffe294" stroke="#e9c04a"/></svg>
<span style="top:483.3px;line-height:16px;left:23px;letter-spacing:-0.29px;">Visual Studio 2013</span>
<span style="top:483.3px;line-height:16px;left:332px;">File folder</span>
<svg style="left:7px;top:501px" width="13" height="16" viewBox="0 0 13 16"><rect x=".5" y=".5" width="11" height="15" rx=".3" fill="#ffe8a1" stroke="#f0cb5c"/><path d="M10.500 15.500v-6.200q0-.8.7-.8h.6q.7 0 .7.8v6.200z" fill="#ffe294" stroke="#e9c04a"/></svg>
<span style="top:502.3px;line-height:16px;left:23px;letter-spacing:-0.29px;">Visual Studio 2015</span>
<span style="top:502.3px;line-height:16px;left:332px;">File folder</span>
<svg style="left:7px;top:520px" width="13" height="16" viewBox="0 0 13 16"><rect x=".5" y=".5" width="11" height="15" rx=".3" fill="#ffe8a1" stroke="#f0cb5c"/><path d="M10.500 15.500v-6.200q0-.8.7-.8h.6q.7 0 .7.8v6.200z" fill="#ffe294" stroke="#e9c04a"/></svg>
<span style="top:521.3px;line-height:16px;left:23px;letter-spacing:-0.29px;">Visual Studio 2017</span>
<span style="top:521.3px;line-height:16px;left:332px;">File folder</span>
<svg style="left:7px;top:539px" width="13" height="16" viewBox="0 0 13 16"><rect x=".5" y=".5" width="11" height="15" rx=".3" fill="#ffe8a1" stroke="#f0cb5c"/><path d="M10.500 15.500v-6.200q0-.8.7-.8h.6q.7 0 .7.8v6.200z" fill="#ffe294" stroke="#e9c04a"/></svg>
<span style="top:540.3px;line-height:16px;left:23px;letter-spacing:-0.29px;">Visual Studio 2019</span>
<span style="top:540.3px;line-height:16px;left:332px;">File folder</span>
<svg style="left:7px;top:558px" width="13" height="16" viewBox="0 0 13 16"><rect x=".5" y=".5" width="11" height="15" rx=".3" fill="#ffe8a1" stroke="#f0cb5c"/><path d="M10.500 15.500v-6.200q0-.8.7-.8h.6q.7 0 .7.8v6.200z" fill="#ffe294" stroke="#e9c04a"/></svg>
<span style="top:559.3px;line-height:16px;left:23px;letter-spacing:-0.15px;">WindowsPowerShell</span>
<span style="top:559.3px;line-height:16px;left:332px;">File folder</span>
<svg style="left:5px;top:577px" width="16" height="16" viewBox="0 0 16 16"><path d="M2.5.5h8l3 3v12h-11z" fill="#fff" stroke="#9b9b9b"/><path d="M10.5.5v3h3" fill="#eee" stroke="#9b9b9b"/><rect x="0" y="7" width="16" height="6.500" rx=".8" fill="#1f6fae"/><path d="M2 12.300v-4h1.300q1 0 1 1t-1 1H2M6 8.300v4h1q1.500 0 1.500-2t-1.500-2zM11 12.300v-4h2.300M11 10.300h1.800" stroke="#fff" fill="none" stroke-width="1.1"/></svg>
<span style="top:578.3px;line-height:16px;left:23px;letter-spacing:-0.19px;transform:scaleX(0.9438);transform-origin:0 0;">(E3351)_P5BV-C Series.pdf</span>
<span style="top:578.3px;line-height:16px;left:273.0px;letter-spacing:-0.21px;transform:scaleX(0.9083);transform-origin:0 0;">6,638 KB</span>
<span style="top:578.3px;line-height:16px;left:332px;">PDF File</span>
<svg style="left:7px;top:596px" width="13" height="16" viewBox="0 0 13 16"><path d="M.5.5h8l3 3v12h-11z" fill="#fff" stroke="#9b9b9b"/><path d="M8.5.5v3h3" fill="#f4f4f4" stroke="#9b9b9b"/></svg>
<span style="top:597.3px;line-height:16px;left:23px;color:#8a8a8a;letter-spacing:0.09px;">.~lock.Video-Title-18.odt#</span>
<span style="top:597.3px;line-height:16px;left:294.0px;color:#8a8a8a;letter-spacing:-0.26px;transform:scaleX(0.8916);transform-origin:0 0;">1 KB</span>
<span style="top:597.3px;line-height:16px;left:332px;color:#8a8a8a;">Cache File</span>
<svg style="left:5px;top:615px" width="16" height="16" viewBox="0 0 16 16"><path d="M3 1.500h7l3 3v10.500H3z" fill="#2b1b55"/><path d="M10 1.500v3h3" fill="#6a58a6"/><circle cx="8" cy="9.800" r="3.500" fill="#ff7a1a"/><path d="M5.3 9.5q.5-3 2.6-3.9-.2 1.5 1.2 2.2 1.9 1 1.5 3.2-.6 2.5-2.9 2.5-2.8 0-2.4-4z" fill="#ffcf3c"/><circle cx="8.300" cy="10.300" r="1.500" fill="#7a3fd0"/></svg>
<span style="top:616.3px;line-height:16px;left:23px;letter-spacing:0.2px;">1.html</span>
<span style="top:616.3px;line-height:16px;left:282.5px;letter-spacing:-0.24px;transform:scaleX(0.8902);transform-origin:0 0;">168 KB</span>
<span style="top:616.3px;line-height:16px;left:332px;">Firefox HTML Document</span>
<svg style="left:7px;top:634px" width="13" height="16" viewBox="0 0 13 16"><path d="M.5.5h8l3 3v12h-11z" fill="#fff" stroke="#9b9b9b"/><path d="M8.5.5v3h3" fill="#f4f4f4" stroke="#9b9b9b"/><path d="M2.5 5.5h7M2.5 7.5h7M2.5 9.5h7M2.5 11.5h7M2.5 13.5h7M2.5 3.5h4" stroke="#9d9d9d" fill="none"/></svg>
<span style="top:635.3px;line-height:16px;left:23px;letter-spacing:0.05px;">1.txt</span>
<span style="top:635.3px;line-height:16px;left:294.0px;letter-spacing:-0.26px;transform:scaleX(0.8916);transform-origin:0 0;">4 KB</span>
<span style="top:635.3px;line-height:16px;left:332px;">Text Document</span>
<svg style="left:5px;top:653px" width="16" height="16" viewBox="0 0 16 16"><path d="M1 11l6.5-5H3.2V4.6h6.3L7.6 3l1-1.2 6 5q1.6 1.8.6 4-1.3 2.4-4.4 2.4-3.5 0-4.6-3l-3.800 2.600z" fill="#f5792a"/><circle cx="10.600" cy="9" r="3" fill="#fff"/><circle cx="10.600" cy="9" r="1.700" fill="#255a9b"/></svg>
<span style="top:654.3px;line-height:16px;left:23px;letter-spacing:0.07px;">arducoper-driver.blend</span>
<span style="top:654.3px;line-height:16px;left:282.5px;letter-spacing:-0.24px;transform:scaleX(0.8902);transform-origin:0 0;">532 KB</span>
<span style="top:654.3px;line-height:16px;left:332px;">Blender File</span>
<svg style="left:7px;top:672px" width="13" height="16" viewBox="0 0 13 16"><path d="M.5.5h8l3 3v12h-11z" fill="#fff" stroke="#9b9b9b"/><path d="M8.5.5v3h3" fill="#f4f4f4" stroke="#9b9b9b"/></svg>
<span style="top:673.3px;line-height:16px;left:23px;letter-spacing:0.03px;">arducoper-driver.blend1</span>
<span style="top:673.3px;line-height:16px;left:282.5px;letter-spacing:-0.24px;transform:scaleX(0.8902);transform-origin:0 0;">514 KB</span>
<span style="top:673.3px;line-height:16px;left:332px;">BLEND1 File</span>
<svg style="left:7px;top:691px" width="13" height="16" viewBox="0 0 13 16"><path d="M.5.5h8l3 3v12h-11z" fill="#fff" stroke="#9b9b9b"/><path d="M8.5.5v3h3" fill="#f4f4f4" stroke="#9b9b9b"/><path d="M2.5 5.5h7M2.5 7.5h7M2.5 9.5h7M2.5 11.5h7M2.5 13.5h7M2.5 3.5h4" stroke="#9d9d9d" fill="none"/></svg>
<span style="top:692.3px;line-height:16px;left:23px;letter-spacing:0.07px;">AU.txt</span>
<span style="top:692.3px;line-height:16px;left:294.0px;letter-spacing:-0.26px;transform:scaleX(0.8916);transform-origin:0 0;">2 KB</span>
<span style="top:692.3px;line-height:16px;left:332px;">Text Document</span>
<svg style="left:7px;top:710px" width="13" height="16" viewBox="0 0 13 16"><path d="M.5.5h8l3 3v12h-11z" fill="#fff" stroke="#9b9b9b"/><path d="M8.5.5v3h3" fill="#f4f4f4" stroke="#9b9b9b"/><path d="M2.5 5.5h7M2.5 7.5h7M2.5 9.5h7M2.5 11.5h7M2.5 13.5h7M2.5 3.5h4" stroke="#9d9d9d" fill="none"/></svg>
<span style="top:711.3px;line-height:16px;left:23px;letter-spacing:0.09px;">Authorize.txt</span>
<span style="top:711.3px;line-height:16px;left:294.0px;letter-spacing:-0.26px;transform:scaleX(0.8916);transform-origin:0 0;">2 KB</span>
<span style="top:711.3px;line-height:16px;left:332px;">Text Document</span>
<svg style="left:7px;top:729px" width="13" height="16" viewBox="0 0 13 16"><path d="M.5.5h8l3 3v12h-11z" fill="#fff" stroke="#9b9b9b"/><path d="M8.5.5v3h3" fill="#f4f4f4" stroke="#9b9b9b"/><path d="M2.5 5.5h7M2.5 7.5h7M2.5 9.5h7M2.5 11.5h7M2.5 13.5h7M2.5 3.5h4" stroke="#9d9d9d" fill="none"/></svg>
<span style="top:730.3px;line-height:16px;left:23px;letter-spacing:-0.05px;">Blazor.txt</span>
<span style="top:730.3px;line-height:16px;left:294.0px;letter-spacing:-0.26px;transform:scaleX(0.8916);transform-origin:0 0;">4 KB</span>
<span style="top:730.3px;line-height:16px;left:332px;">Text Document</span>
<svg style="left:5px;top:748px" width="16" height="16" viewBox="0 0 16 16"><path d="M2.5.5h8l3 3v12h-11z" fill="#fff" stroke="#a9a9a9"/><path d="M3.5 5.2l1.4-1M6 3.6l1.6-.7M8.8 2.8l1.7.2M11.6 4l1.2 1" stroke="#f2a21b" stroke-width="1.8" fill="none"/><rect x="0" y="7" width="16" height="7.5" rx=".8" fill="#8c1212"/><path d="M1.7 13v-4.4h1.5q1 0 1 1.1t-1 1.1H1.7M6 13V8.6l2.6 4.4V8.6M13.6 9.3q-.5-.8-1.5-.8-1.5 0-1.5 2.3t1.5 2.3q1 0 1.5-.6v-1.4h-1.3" stroke="#fff" fill="none" stroke-width="1.1"/></svg>
<span style="top:749.3px;line-height:16px;left:23px;letter-spacing:-0.1px;">BlazorActive.png</span>
<span style="top:749.3px;line-height:16px;left:273.0px;letter-spacing:-0.21px;transform:scaleX(0.9083);transform-origin:0 0;">2,395 KB</span>
<span style="top:749.3px;line-height:16px;left:332px;">PNG File</span>
<svg style="left:5px;top:767px" width="16" height="16" viewBox="0 0 16 16"><path d="M2.5.5h8l3 3v12h-11z" fill="#fff" stroke="#a9a9a9"/><path d="M3.5 5.2l1.4-1M6 3.6l1.6-.7M8.8 2.8l1.7.2M11.6 4l1.2 1" stroke="#f2a21b" stroke-width="1.8" fill="none"/><rect x="0" y="7" width="16" height="7.5" rx=".8" fill="#8c1212"/><path d="M1.7 13v-4.4h1.5q1 0 1 1.1t-1 1.1H1.7M6 13V8.6l2.6 4.4V8.6M13.6 9.3q-.5-.8-1.5-.8-1.5 0-1.5 2.3t1.5 2.3q1 0 1.5-.6v-1.4h-1.3" stroke="#fff" fill="none" stroke-width="1.1"/></svg>
<span style="top:768.3px;line-height:16px;left:23px;letter-spacing:-0.22px;">BlazorStart.png</span>
<span style="top:768.3px;line-height:16px;left:273.0px;letter-spacing:-0.21px;transform:scaleX(0.9083);transform-origin:0 0;">1,745 KB</span>
<span style="top:768.3px;line-height:16px;left:332px;">PNG File</span>
<svg style="left:7px;top:786px" width="13" height="16" viewBox="0 0 13 16"><path d="M.5.5h8l3 3v12h-11z" fill="#fff" stroke="#9b9b9b"/><path d="M8.5.5v3h3" fill="#f4f4f4" stroke="#9b9b9b"/><path d="M2.5 5.5h7M2.5 7.5h7M2.5 9.5h7M2.5 11.5h7M2.5 13.5h7M2.5 3.5h4" stroke="#9d9d9d" fill="none"/></svg>
<span style="top:787.3px;line-height:16px;left:23px;letter-spacing:0.04px;">Bootstrap.txt</span>
<span style="top:787.3px;line-height:16px;left:294.0px;letter-spacing:-0.26px;transform:scaleX(0.8916);transform-origin:0 0;">1 KB</span>
<span style="top:787.3px;line-height:16px;left:332px;">Text Document</span>
<svg style="left:5px;top:805px" width="16" height="16" viewBox="0 0 16 16"><path d="M2.5.5h8l3 3v12h-11z" fill="#fff" stroke="#a9a9a9"/><path d="M3.5 5.2l1.4-1M6 3.6l1.6-.7M8.8 2.8l1.7.2M11.6 4l1.2 1" stroke="#f2a21b" stroke-width="1.8" fill="none"/><rect x="0" y="7" width="16" height="7.5" rx=".8" fill="#8c1212"/><path d="M1.7 13v-4.4h1.5q1 0 1 1.1t-1 1.1H1.7M6 13V8.6l2.6 4.4V8.6M13.6 9.3q-.5-.8-1.5-.8-1.5 0-1.5 2.3t1.5 2.3q1 0 1.5-.6v-1.4h-1.3" stroke="#fff" fill="none" stroke-width="1.1"/></svg>
<span style="top:806.3px;line-height:16px;left:23px;letter-spacing:0.05px;">C#-1.png</span>
<span style="top:806.3px;line-height:16px;left:273.0px;letter-spacing:-0.21px;transform:scaleX(0.9083);transform-origin:0 0;">2,437 KB</span>
<span style="top:806.3px;line-height:16px;left:332px;">PNG File</span>
<svg style="left:5px;top:824px" width="16" height="16" viewBox="0 0 16 16"><path d="M2.5.5h8l3 3v12h-11z" fill="#fff" stroke="#a9a9a9"/><path d="M3.5 5.2l1.4-1M6 3.6l1.6-.7M8.8 2.8l1.7.2M11.6 4l1.2 1" stroke="#f2a21b" stroke-width="1.8" fill="none"/><rect x="0" y="7" width="16" height="7.5" rx=".8" fill="#8c1212"/><path d="M1.7 13v-4.4h1.5q1 0 1 1.1t-1 1.1H1.7M6 13V8.6l2.6 4.4V8.6M13.6 9.3q-.5-.8-1.5-.8-1.5 0-1.5 2.3t1.5 2.3q1 0 1.5-.6v-1.4h-1.3" stroke="#fff" fill="none" stroke-width="1.1"/></svg>
<span style="top:825.3px;line-height:16px;left:23px;letter-spacing:0.05px;">C#-2.png</span>
<span style="top:825.3px;line-height:16px;left:273.0px;letter-spacing:-0.21px;transform:scaleX(0.9083);transform-origin:0 0;">2,323 KB</span>
<span style="top:825.3px;line-height:16px;left:332px;">PNG File</span>
<svg style="left:5px;top:843px" width="16" height="16" viewBox="0 0 16 16"><path d="M2.5.5h8l3 3v12h-11z" fill="#fff" stroke="#9b9b9b"/><path d="M10.5.5v3h3" fill="#eee" stroke="#9b9b9b"/><rect x="0" y="7" width="16" height="6.500" rx=".8" fill="#1f6fae"/><path d="M2 12.300v-4h1.300q1 0 1 1t-1 1H2M6 8.300v4h1q1.500 0 1.500-2t-1.500-2zM11 12.300v-4h2.300M11 10.300h1.800" stroke="#fff" fill="none" stroke-width="1.1"/></svg>
<span style="top:844.3px;line-height:16px;left:23px;letter-spacing:-0.04px;">cover 1.pdf</span>
<span style="top:844.3px;line-height:16px;left:287.5px;letter-spacing:-0.25px;transform:scaleX(0.9142);transform-origin:0 0;">30 KB</span>
<span style="top:844.3px;line-height:16px;left:332px;">PDF File</span>
</div>
<div style="left:340px;top:174px;width:16px;height:851px;background:#f0f0f0;"></div>
<div style="left:340px;top:191px;width:15px;height:184px;background:#cdcdcd;"></div>
<svg style="left:347.5px;top:183px" width="1" height="1"><path d="M-3.500 2l3.500-3.500 3.500 3.500" fill="none" stroke="#606060" stroke-width="1.700"/></svg>
<svg style="left:347.5px;top:1017px" width="1" height="1"><path d="M-3.500-2l3.500 3.500 3.500-3.500" fill="none" stroke="#606060" stroke-width="1.700"/></svg>
<div style="left:1px;top:1025px;width:355px;height:17px;background:#f0f0f0;"></div>
<div style="left:19px;top:1026px;width:173px;height:15px;background:#cdcdcd;"></div>
<svg style="left:10px;top:1033.5px" width="1" height="1"><path d="M2-3.500l-3.500 3.500 3.500 3.500" fill="none" stroke="#606060" stroke-width="1.700"/></svg>
<svg style="left:331px;top:1033.5px" width="1" height="1"><path d="M-2-3.500l3.500 3.500-3.500 3.500" fill="none" stroke="#606060" stroke-width="1.700"/></svg>
<span style="top:1047.8px;line-height:16px;left:3px;letter-spacing:-0.27px;">0 B of 315 MB in 0 of 190</span>
<div style="left:363px;top:172px;width:1237px;height:438px;background:#fff;border:1px solid #828790;box-sizing:border-box;"></div>
<div style="left:364px;top:173px;width:1218px;height:435px;overflow:hidden">
<div style="left:31px;top:19px;width:1px;height:92px;background:repeating-linear-gradient(#808080 0 1px,transparent 1px 2px)"></div>
<div style="left:31px;top:127px;width:1px;height:2px;background:repeating-linear-gradient(#808080 0 1px,transparent 1px 2px)"></div>
<div style="left:31px;top:145px;width:1px;height:300px;background:repeating-linear-gradient(#808080 0 1px,transparent 1px 2px)"></div>
<div style="left:69px;top:163px;width:1px;height:280px;background:repeating-linear-gradient(#808080 0 1px,transparent 1px 2px)"></div>
<div style="left:50px;top:145px;width:1px;height:2px;background:repeating-linear-gradient(#808080 0 1px,transparent 1px 2px)"></div>
<svg style="left:11.5px;top:10px" width="1" height="1"><path d="M-4-2.500l4 4 4-4" fill="none" stroke="#262626" stroke-width="1.500"/></svg>
<div style="left:20px;top:11px;width:3px;height:1px;background:repeating-linear-gradient(90deg,#808080 0 1px,transparent 1px 2px)"></div>
<svg style="left:25px;top:2px" width="13" height="16" viewBox="0 0 13 16"><rect x=".5" y=".5" width="11" height="15" rx=".3" fill="#ffe8a1" stroke="#f0cb5c"/><path d="M10.500 15.500v-6.200q0-.8.7-.8h.6q.7 0 .7.8v6.200z" fill="#ffe294" stroke="#e9c04a"/></svg>
<span style="top:2.3px;line-height:16px;left:44px;letter-spacing:0.38px;">/ &lt;root&gt;</span>
<div style="left:33px;top:29px;width:9px;height:1px;background:repeating-linear-gradient(90deg,#808080 0 1px,transparent 1px 2px)"></div>
<svg style="left:44px;top:20px" width="13" height="16" viewBox="0 0 13 16"><rect x=".5" y=".5" width="11" height="15" rx=".3" fill="#ffe8a1" stroke="#f0cb5c"/><path d="M10.500 15.500v-6.200q0-.8.7-.8h.6q.7 0 .7.8v6.200z" fill="#ffe294" stroke="#e9c04a"/></svg>
<span style="top:20.3px;line-height:16px;left:63.5px;color:#7f7f7f;letter-spacing:-0.28px;">.snapshots</span>
<div style="left:33px;top:47px;width:9px;height:1px;background:repeating-linear-gradient(90deg,#808080 0 1px,transparent 1px 2px)"></div>
<svg style="left:44px;top:38px" width="13" height="16" viewBox="0 0 13 16"><rect x=".5" y=".5" width="11" height="15" rx=".3" fill="#ffe8a1" stroke="#f0cb5c"/><path d="M10.500 15.500v-6.200q0-.8.7-.8h.6q.7 0 .7.8v6.200z" fill="#ffe294" stroke="#e9c04a"/></svg>
<span style="top:38.3px;line-height:16px;left:63.5px;color:#7f7f7f;letter-spacing:-0.19px;transform:scaleX(0.9439);transform-origin:0 0;">.Trash-0</span>
<div style="left:33px;top:65px;width:9px;height:1px;background:repeating-linear-gradient(90deg,#808080 0 1px,transparent 1px 2px)"></div>
<svg style="left:44px;top:56px" width="13" height="16" viewBox="0 0 13 16"><rect x=".5" y=".5" width="11" height="15" rx=".3" fill="#ffe8a1" stroke="#f0cb5c"/><path d="M10.500 15.500v-6.200q0-.8.7-.8h.6q.7 0 .7.8v6.200z" fill="#ffe294" stroke="#e9c04a"/></svg>
<span style="top:56.3px;line-height:16px;left:63.5px;letter-spacing:-0.01px;">bin</span>
<div style="left:33px;top:83px;width:9px;height:1px;background:repeating-linear-gradient(90deg,#808080 0 1px,transparent 1px 2px)"></div>
<svg style="left:44px;top:74px" width="13" height="16" viewBox="0 0 13 16"><rect x=".5" y=".5" width="11" height="15" rx=".3" fill="#ffe8a1" stroke="#f0cb5c"/><path d="M10.500 15.500v-6.200q0-.8.7-.8h.6q.7 0 .7.8v6.200z" fill="#ffe294" stroke="#e9c04a"/></svg>
<span style="top:74.3px;line-height:16px;left:63.5px;letter-spacing:0.38px;">boot</span>
<div style="left:33px;top:101px;width:9px;height:1px;background:repeating-linear-gradient(90deg,#808080 0 1px,transparent 1px 2px)"></div>
<svg style="left:44px;top:92px" width="13" height="16" viewBox="0 0 13 16"><rect x=".5" y=".5" width="11" height="15" rx=".3" fill="#ffe8a1" stroke="#f0cb5c"/><path d="M10.500 15.500v-6.200q0-.8.7-.8h.6q.7 0 .7.8v6.200z" fill="#ffe294" stroke="#e9c04a"/></svg>
<span style="top:92.3px;line-height:16px;left:63.5px;letter-spacing:-0.43px;">dev</span>
<svg style="left:30.5px;top:118px" width="1" height="1"><path d="M-2-4l4 4-4 4" fill="none" stroke="#a6a6a6" stroke-width="1.400"/></svg>
<div style="left:39px;top:119px;width:3px;height:1px;background:repeating-linear-gradient(90deg,#808080 0 1px,transparent 1px 2px)"></div>
<svg style="left:44px;top:110px" width="13" height="16" viewBox="0 0 13 16"><rect x=".5" y=".5" width="11" height="15" rx=".3" fill="#ffe8a1" stroke="#f0cb5c"/><path d="M10.500 15.500v-6.200q0-.8.7-.8h.6q.7 0 .7.8v6.200z" fill="#ffe294" stroke="#e9c04a"/></svg>
<span style="top:110.3px;line-height:16px;left:63.5px;letter-spacing:-0.26px;">etc</span>
<svg style="left:30.5px;top:136px" width="1" height="1"><path d="M-4-2.500l4 4 4-4" fill="none" stroke="#262626" stroke-width="1.500"/></svg>
<div style="left:39px;top:137px;width:3px;height:1px;background:repeating-linear-gradient(90deg,#808080 0 1px,transparent 1px 2px)"></div>
<svg style="left:44px;top:128px" width="13" height="16" viewBox="0 0 13 16"><rect x=".5" y=".5" width="11" height="15" rx=".3" fill="#ffe8a1" stroke="#f0cb5c"/><path d="M10.500 15.500v-6.200q0-.8.7-.8h.6q.7 0 .7.8v6.200z" fill="#ffe294" stroke="#e9c04a"/></svg>
<span style="top:128.3px;line-height:16px;left:63.5px;letter-spacing:0.16px;">home</span>
<svg style="left:49.5px;top:154px" width="1" height="1"><path d="M-4-2.500l4 4 4-4" fill="none" stroke="#262626" stroke-width="1.500"/></svg>
<div style="left:58px;top:155px;width:3px;height:1px;background:repeating-linear-gradient(90deg,#808080 0 1px,transparent 1px 2px)"></div>
<svg style="left:63px;top:146px" width="13" height="16" viewBox="0 0 13 16"><rect x=".5" y=".5" width="11" height="15" rx=".3" fill="#ffe8a1" stroke="#f0cb5c"/><path d="M10.500 15.500v-6.200q0-.8.7-.8h.6q.7 0 .7.8v6.200z" fill="#ffe294" stroke="#e9c04a"/></svg>
<span style="top:146.3px;line-height:16px;left:82px;letter-spacing:0.33px;">admin</span>
<div style="left:71px;top:173px;width:9px;height:1px;background:repeating-linear-gradient(90deg,#808080 0 1px,transparent 1px 2px)"></div>
<svg style="left:82px;top:164px" width="13" height="16" viewBox="0 0 13 16"><rect x=".5" y=".5" width="11" height="15" rx=".3" fill="#ffe8a1" stroke="#f0cb5c"/><path d="M10.500 15.500v-6.200q0-.8.7-.8h.6q.7 0 .7.8v6.200z" fill="#ffe294" stroke="#e9c04a"/></svg>
<span style="top:164.3px;line-height:16px;left:101px;color:#7f7f7f;letter-spacing:-0.29px;">.anydesk</span>
<div style="left:71px;top:191px;width:9px;height:1px;background:repeating-linear-gradient(90deg,#808080 0 1px,transparent 1px 2px)"></div>
<svg style="left:82px;top:182px" width="13" height="16" viewBox="0 0 13 16"><rect x=".5" y=".5" width="11" height="15" rx=".3" fill="#ffe8a1" stroke="#f0cb5c"/><path d="M10.500 15.500v-6.200q0-.8.7-.8h.6q.7 0 .7.8v6.200z" fill="#ffe294" stroke="#e9c04a"/></svg>
<span style="top:182.3px;line-height:16px;left:101px;color:#7f7f7f;letter-spacing:-0.27px;">.cache</span>
<div style="left:71px;top:209px;width:9px;height:1px;background:repeating-linear-gradient(90deg,#808080 0 1px,transparent 1px 2px)"></div>
<svg style="left:82px;top:200px" width="13" height="16" viewBox="0 0 13 16"><rect x=".5" y=".5" width="11" height="15" rx=".3" fill="#ffe8a1" stroke="#f0cb5c"/><path d="M10.500 15.500v-6.200q0-.8.7-.8h.6q.7 0 .7.8v6.200z" fill="#ffe294" stroke="#e9c04a"/></svg>
<span style="top:200.3px;line-height:16px;left:101px;color:#7f7f7f;letter-spacing:0.27px;">.config</span>
<div style="left:71px;top:227px;width:9px;height:1px;background:repeating-linear-gradient(90deg,#808080 0 1px,transparent 1px 2px)"></div>
<svg style="left:82px;top:218px" width="13" height="16" viewBox="0 0 13 16"><rect x=".5" y=".5" width="11" height="15" rx=".3" fill="#ffe8a1" stroke="#f0cb5c"/><path d="M10.500 15.500v-6.200q0-.8.7-.8h.6q.7 0 .7.8v6.200z" fill="#ffe294" stroke="#e9c04a"/></svg>
<span style="top:218.3px;line-height:16px;left:101px;color:#7f7f7f;letter-spacing:0.13px;">.fonts</span>
<div style="left:71px;top:245px;width:9px;height:1px;background:repeating-linear-gradient(90deg,#808080 0 1px,transparent 1px 2px)"></div>
<svg style="left:82px;top:236px" width="13" height="16" viewBox="0 0 13 16"><rect x=".5" y=".5" width="11" height="15" rx=".3" fill="#ffe8a1" stroke="#f0cb5c"/><path d="M10.500 15.500v-6.200q0-.8.7-.8h.6q.7 0 .7.8v6.200z" fill="#ffe294" stroke="#e9c04a"/></svg>
<span style="top:236.3px;line-height:16px;left:101px;color:#7f7f7f;letter-spacing:0.26px;">.gnupg</span>
<div style="left:71px;top:263px;width:9px;height:1px;background:repeating-linear-gradient(90deg,#808080 0 1px,transparent 1px 2px)"></div>
<svg style="left:82px;top:254px" width="13" height="16" viewBox="0 0 13 16"><rect x=".5" y=".5" width="11" height="15" rx=".3" fill="#ffe8a1" stroke="#f0cb5c"/><path d="M10.500 15.500v-6.200q0-.8.7-.8h.6q.7 0 .7.8v6.200z" fill="#ffe294" stroke="#e9c04a"/></svg>
<span style="top:254.3px;line-height:16px;left:101px;color:#7f7f7f;letter-spacing:-0.34px;">.kde4</span>
<div style="left:71px;top:281px;width:9px;height:1px;background:repeating-linear-gradient(90deg,#808080 0 1px,transparent 1px 2px)"></div>
<svg style="left:82px;top:272px" width="13" height="16" viewBox="0 0 13 16"><rect x=".5" y=".5" width="11" height="15" rx=".3" fill="#ffe8a1" stroke="#f0cb5c"/><path d="M10.500 15.500v-6.200q0-.8.7-.8h.6q.7 0 .7.8v6.200z" fill="#ffe294" stroke="#e9c04a"/></svg>
<span style="top:272.3px;line-height:16px;left:101px;color:#7f7f7f;">.local</span>
<div style="left:71px;top:299px;width:9px;height:1px;background:repeating-linear-gradient(90deg,#808080 0 1px,transparent 1px 2px)"></div>
<svg style="left:82px;top:290px" width="13" height="16" viewBox="0 0 13 16"><rect x=".5" y=".5" width="11" height="15" rx=".3" fill="#ffe8a1" stroke="#f0cb5c"/><path d="M10.500 15.500v-6.200q0-.8.7-.8h.6q.7 0 .7.8v6.200z" fill="#ffe294" stroke="#e9c04a"/></svg>
<span style="top:290.3px;line-height:16px;left:101px;color:#7f7f7f;letter-spacing:-0.22px;transform:scaleX(0.9365);transform-origin:0 0;">.ssh</span>
<div style="left:78px;top:307px;width:49px;height:18px;background:#d9d9d9;"></div>
<div style="left:71px;top:317px;width:9px;height:1px;background:repeating-linear-gradient(90deg,#808080 0 1px,transparent 1px 2px)"></div>
<svg style="left:82px;top:308px" width="13" height="16" viewBox="0 0 13 16"><rect x=".5" y=".5" width="11" height="15" rx=".3" fill="#ffe8a1" stroke="#f0cb5c"/><path d="M10.500 15.500v-6.200q0-.8.7-.8h.6q.7 0 .7.8v6.200z" fill="#ffe294" stroke="#e9c04a"/></svg>
<span style="top:308.3px;line-height:16px;left:101px;letter-spacing:-0.01px;">.vnc</span>
<div style="left:71px;top:335px;width:9px;height:1px;background:repeating-linear-gradient(90deg,#808080 0 1px,transparent 1px 2px)"></div>
<svg style="left:82px;top:326px" width="13" height="16" viewBox="0 0 13 16"><rect x=".5" y=".5" width="11" height="15" rx=".3" fill="#ffe8a1" stroke="#f0cb5c"/><path d="M10.500 15.500v-6.200q0-.8.7-.8h.6q.7 0 .7.8v6.200z" fill="#ffe294" stroke="#e9c04a"/></svg>
<span style="top:326.3px;line-height:16px;left:101px;letter-spacing:0.24px;">bin</span>
<div style="left:71px;top:353px;width:9px;height:1px;background:repeating-linear-gradient(90deg,#808080 0 1px,transparent 1px 2px)"></div>
<svg style="left:82px;top:344px" width="13" height="16" viewBox="0 0 13 16"><rect x=".5" y=".5" width="11" height="15" rx=".3" fill="#ffe8a1" stroke="#f0cb5c"/><path d="M10.500 15.500v-6.200q0-.8.7-.8h.6q.7 0 .7.8v6.200z" fill="#ffe294" stroke="#e9c04a"/></svg>
<span style="top:344.3px;line-height:16px;left:101px;letter-spacing:-0.24px;">Desktop</span>
<div style="left:71px;top:371px;width:9px;height:1px;background:repeating-linear-gradient(90deg,#808080 0 1px,transparent 1px 2px)"></div>
<svg style="left:82px;top:362px" width="13" height="16" viewBox="0 0 13 16"><rect x=".5" y=".5" width="11" height="15" rx=".3" fill="#ffe8a1" stroke="#f0cb5c"/><path d="M10.500 15.500v-6.200q0-.8.7-.8h.6q.7 0 .7.8v6.200z" fill="#ffe294" stroke="#e9c04a"/></svg>
<span style="top:362.3px;line-height:16px;left:101px;letter-spacing:0.04px;">Documents</span>
<div style="left:71px;top:389px;width:9px;height:1px;background:repeating-linear-gradient(90deg,#808080 0 1px,transparent 1px 2px)"></div>
<svg style="left:82px;top:380px" width="13" height="16" viewBox="0 0 13 16"><rect x=".5" y=".5" width="11" height="15" rx=".3" fill="#ffe8a1" stroke="#f0cb5c"/><path d="M10.500 15.500v-6.200q0-.8.7-.8h.6q.7 0 .7.8v6.200z" fill="#ffe294" stroke="#e9c04a"/></svg>
<span style="top:380.3px;line-height:16px;left:101px;letter-spacing:-0.05px;">Downloads</span>
<div style="left:71px;top:407px;width:9px;height:1px;background:repeating-linear-gradient(90deg,#808080 0 1px,transparent 1px 2px)"></div>
<svg style="left:82px;top:398px" width="13" height="16" viewBox="0 0 13 16"><rect x=".5" y=".5" width="11" height="15" rx=".3" fill="#ffe8a1" stroke="#f0cb5c"/><path d="M10.500 15.500v-6.200q0-.8.7-.8h.6q.7 0 .7.8v6.200z" fill="#ffe294" stroke="#e9c04a"/></svg>
<span style="top:398.3px;line-height:16px;left:101px;letter-spacing:0.16px;">Music</span>
<div style="left:71px;top:425px;width:9px;height:1px;background:repeating-linear-gradient(90deg,#808080 0 1px,transparent 1px 2px)"></div>
<svg style="left:82px;top:416px" width="13" height="16" viewBox="0 0 13 16"><rect x=".5" y=".5" width="11" height="15" rx=".3" fill="#ffe8a1" stroke="#f0cb5c"/><path d="M10.500 15.500v-6.200q0-.8.7-.8h.6q.7 0 .7.8v6.200z" fill="#ffe294" stroke="#e9c04a"/></svg>
<span style="top:416.3px;line-height:16px;left:101px;letter-spacing:-0.19px;">Pictures</span>
<div style="left:71px;top:443px;width:9px;height:1px;background:repeating-linear-gradient(90deg,#808080 0 1px,transparent 1px 2px)"></div>
<svg style="left:82px;top:434px" width="13" height="16" viewBox="0 0 13 16"><rect x=".5" y=".5" width="11" height="15" rx=".3" fill="#ffe8a1" stroke="#f0cb5c"/><path d="M10.500 15.500v-6.200q0-.8.7-.8h.6q.7 0 .7.8v6.200z" fill="#ffe294" stroke="#e9c04a"/></svg>
<span style="top:434.3px;line-height:16px;left:101px;letter-spacing:0.46px;">Public</span>
</div>
<div style="left:1582px;top:174px;width:16px;height:434px;background:#f0f0f0;"></div>
<div style="left:1582px;top:191px;width:15px;height:233px;background:#cdcdcd;"></div>
<svg style="left:1589.5px;top:183px" width="1" height="1"><path d="M-3.500 2l3.500-3.500 3.500 3.500" fill="none" stroke="#606060" stroke-width="1.700"/></svg>
<svg style="left:1589.5px;top:600px" width="1" height="1"><path d="M-3.500-2l3.500 3.500 3.500-3.500" fill="none" stroke="#606060" stroke-width="1.700"/></svg>
<div style="left:363px;top:613px;width:1237px;height:430px;background:#fff;border:1px solid #828790;box-sizing:border-box;"></div>
<div style="left:651px;top:615px;width:1px;height:24px;background:#e5e5e5;"></div>
<div style="left:651px;top:639px;width:1px;height:403px;background:#e9f2fc;"></div>
<div style="left:793px;top:615px;width:1px;height:24px;background:#e5e5e5;"></div>
<div style="left:793px;top:639px;width:1px;height:403px;background:#e9f2fc;"></div>
<div style="left:943px;top:615px;width:1px;height:24px;background:#e5e5e5;"></div>
<div style="left:943px;top:639px;width:1px;height:403px;background:#e9f2fc;"></div>
<div style="left:1022px;top:615px;width:1px;height:24px;background:#e5e5e5;"></div>
<div style="left:1022px;top:639px;width:1px;height:403px;background:#e9f2fc;"></div>
<div style="left:1084px;top:615px;width:1px;height:24px;background:#e5e5e5;"></div>
<div style="left:1084px;top:639px;width:1px;height:403px;background:#e9f2fc;"></div>
<div style="left:366px;top:639px;width:1px;height:403px;background:#e9f2fc;"></div>
<span style="top:618.8px;line-height:16px;left:371px;letter-spacing:-0.01px;">Name</span>
<span style="top:618.8px;line-height:16px;left:768px;letter-spacing:-0.23px;transform:scaleX(0.8833);transform-origin:0 0;">Size</span>
<span style="top:618.8px;line-height:16px;left:800px;letter-spacing:-0.29px;">Changed</span>
<span style="top:618.8px;line-height:16px;left:950px;letter-spacing:-0.2px;">Rights</span>
<span style="top:618.8px;line-height:16px;left:1029.5px;letter-spacing:-0.09px;">Owner</span>
<svg style="left:371px;top:640px" width="13" height="16" viewBox="0 0 13 16"><rect x=".5" y=".5" width="11" height="15" rx=".3" fill="#ffe8a1" stroke="#f0cb5c"/><path d="M10.500 15.500v-6.200q0-.8.7-.8h.6q.7 0 .7.8v6.200z" fill="#ffe294" stroke="#e9c04a"/><path d="M3.500 8.300v4.200h5.500M1.200 10.500l2.300-2.600 2.300 2.600" fill="none" stroke="#4d4d4d" stroke-width="1.300"/></svg>
<span style="top:641.3px;line-height:16px;left:387px;letter-spacing:-0.2px;transform:scaleX(0.9271);transform-origin:0 0;">..</span>
<span style="top:641.3px;line-height:16px;left:800px;letter-spacing:-0.24px;">9/25/2020 11:34:09 AM</span>
<span style="top:641.3px;line-height:16px;left:950px;letter-spacing:0.17px;">rwxr-xr-x</span>
<span style="top:641.3px;line-height:16px;left:1029.5px;letter-spacing:0.08px;">admin</span>
<div style="left:369px;top:658px;width:282px;height:19px;background:#cce8ff;"></div>
<div style="left:386px;top:659px;width:38px;height:17px;box-sizing:border-box;border:1px dotted #000"></div>
<svg style="left:371px;top:659px" width="13" height="16" viewBox="0 0 13 16"><path d="M.5.5h8l3 3v12h-11z" fill="#fff" stroke="#9b9b9b"/><path d="M8.5.5v3h3" fill="#f4f4f4" stroke="#9b9b9b"/></svg>
<span style="top:660.3px;line-height:16px;left:387px;letter-spacing:0.39px;">config</span>
<span style="top:660.3px;line-height:16px;left:763px;letter-spacing:-0.26px;transform:scaleX(0.8916);transform-origin:0 0;">1 KB</span>
<span style="top:660.3px;line-height:16px;left:800px;letter-spacing:-0.32px;">9/25/2020 1:47:22 PM</span>
<span style="top:660.3px;line-height:16px;left:950px;letter-spacing:0.54px;">rw-r--r--</span>
<span style="top:660.3px;line-height:16px;left:1029.5px;letter-spacing:0.08px;">admin</span>
<svg style="left:371px;top:678px" width="13" height="16" viewBox="0 0 13 16"><path d="M.5.5h8l3 3v12h-11z" fill="#fff" stroke="#9b9b9b"/><path d="M8.5.5v3h3" fill="#f4f4f4" stroke="#9b9b9b"/><path d="M2.5 5.5h7M2.5 7.5h7M2.5 9.5h7M2.5 11.5h7M2.5 13.5h7M2.5 3.5h4" stroke="#9d9d9d" fill="none"/></svg>
<span style="top:679.3px;line-height:16px;left:387px;letter-spacing:0.11px;">linux-au3t:2.log</span>
<span style="top:679.3px;line-height:16px;left:763px;letter-spacing:-0.26px;transform:scaleX(0.8916);transform-origin:0 0;">7 KB</span>
<span style="top:679.3px;line-height:16px;left:800px;letter-spacing:-0.24px;">9/25/2020 11:13:49 AM</span>
<span style="top:679.3px;line-height:16px;left:950px;letter-spacing:0.54px;">rw-r--r--</span>
<span style="top:679.3px;line-height:16px;left:1029.5px;letter-spacing:0.08px;">admin</span>
<svg style="left:371px;top:697px" width="13" height="16" viewBox="0 0 13 16"><path d="M.5.5h8l3 3v12h-11z" fill="#fff" stroke="#9b9b9b"/><path d="M8.5.5v3h3" fill="#f4f4f4" stroke="#9b9b9b"/></svg>
<span style="top:698.3px;line-height:16px;left:387px;letter-spacing:0.11px;">linux-au3t:2.pid</span>
<span style="top:698.3px;line-height:16px;left:763px;letter-spacing:-0.26px;transform:scaleX(0.8916);transform-origin:0 0;">1 KB</span>
<span style="top:698.3px;line-height:16px;left:800px;letter-spacing:-0.24px;">9/25/2020 11:13:26 AM</span>
<span style="top:698.3px;line-height:16px;left:950px;letter-spacing:0.54px;">rw-r--r--</span>
<span style="top:698.3px;line-height:16px;left:1029.5px;letter-spacing:0.08px;">admin</span>
<svg style="left:371px;top:716px" width="13" height="16" viewBox="0 0 13 16"><path d="M.5.5h8l3 3v12h-11z" fill="#fff" stroke="#9b9b9b"/><path d="M8.5.5v3h3" fill="#f4f4f4" stroke="#9b9b9b"/><path d="M2.5 5.5h7M2.5 7.5h7M2.5 9.5h7M2.5 11.5h7M2.5 13.5h7M2.5 3.5h4" stroke="#9d9d9d" fill="none"/></svg>
<span style="top:717.3px;line-height:16px;left:387px;letter-spacing:0.11px;">linux-au3t:3.log</span>
<span style="top:717.3px;line-height:16px;left:763px;letter-spacing:-0.26px;transform:scaleX(0.8916);transform-origin:0 0;">7 KB</span>
<span style="top:717.3px;line-height:16px;left:800px;letter-spacing:-0.24px;">9/25/2020 11:19:12 AM</span>
<span style="top:717.3px;line-height:16px;left:950px;letter-spacing:0.54px;">rw-r--r--</span>
<span style="top:717.3px;line-height:16px;left:1029.5px;letter-spacing:0.08px;">admin</span>
<svg style="left:371px;top:735px" width="13" height="16" viewBox="0 0 13 16"><path d="M.5.5h8l3 3v12h-11z" fill="#fff" stroke="#9b9b9b"/><path d="M8.5.5v3h3" fill="#f4f4f4" stroke="#9b9b9b"/><path d="M2.5 5.5h7M2.5 7.5h7M2.5 9.5h7M2.5 11.5h7M2.5 13.5h7M2.5 3.5h4" stroke="#9d9d9d" fill="none"/></svg>
<span style="top:736.3px;line-height:16px;left:387px;letter-spacing:0.11px;">linux-au3t:4.log</span>
<span style="top:736.3px;line-height:16px;left:763px;letter-spacing:-0.26px;transform:scaleX(0.8916);transform-origin:0 0;">7 KB</span>
<span style="top:736.3px;line-height:16px;left:800px;letter-spacing:-0.24px;">9/25/2020 11:26:46 AM</span>
<span style="top:736.3px;line-height:16px;left:950px;letter-spacing:0.54px;">rw-r--r--</span>
<span style="top:736.3px;line-height:16px;left:1029.5px;letter-spacing:0.08px;">admin</span>
<svg style="left:371px;top:754px" width="13" height="16" viewBox="0 0 13 16"><path d="M.5.5h8l3 3v12h-11z" fill="#fff" stroke="#9b9b9b"/><path d="M8.5.5v3h3" fill="#f4f4f4" stroke="#9b9b9b"/></svg>
<span style="top:755.3px;line-height:16px;left:387px;letter-spacing:0.11px;">linux-au3t:4.pid</span>
<span style="top:755.3px;line-height:16px;left:763px;letter-spacing:-0.26px;transform:scaleX(0.8916);transform-origin:0 0;">1 KB</span>
<span style="top:755.3px;line-height:16px;left:800px;letter-spacing:-0.24px;">9/25/2020 11:22:50 AM</span>
<span style="top:755.3px;line-height:16px;left:950px;letter-spacing:0.54px;">rw-r--r--</span>
<span style="top:755.3px;line-height:16px;left:1029.5px;letter-spacing:0.08px;">admin</span>
<svg style="left:371px;top:773px" width="13" height="16" viewBox="0 0 13 16"><path d="M.5.5h8l3 3v12h-11z" fill="#fff" stroke="#9b9b9b"/><path d="M8.5.5v3h3" fill="#f4f4f4" stroke="#9b9b9b"/><path d="M2.5 5.5h7M2.5 7.5h7M2.5 9.5h7M2.5 11.5h7M2.5 13.5h7M2.5 3.5h4" stroke="#9d9d9d" fill="none"/></svg>
<span style="top:774.3px;line-height:16px;left:387px;letter-spacing:0.11px;">linux-au3t:5.log</span>
<span style="top:774.3px;line-height:16px;left:763px;letter-spacing:-0.26px;transform:scaleX(0.8916);transform-origin:0 0;">7 KB</span>
<span style="top:774.3px;line-height:16px;left:800px;letter-spacing:-0.24px;">9/25/2020 11:34:36 AM</span>
<span style="top:774.3px;line-height:16px;left:950px;letter-spacing:0.54px;">rw-r--r--</span>
<span style="top:774.3px;line-height:16px;left:1029.5px;letter-spacing:0.08px;">admin</span>
<svg style="left:371px;top:792px" width="13" height="16" viewBox="0 0 13 16"><path d="M.5.5h8l3 3v12h-11z" fill="#fff" stroke="#9b9b9b"/><path d="M8.5.5v3h3" fill="#f4f4f4" stroke="#9b9b9b"/></svg>
<span style="top:793.3px;line-height:16px;left:387px;letter-spacing:0.11px;">linux-au3t:5.pid</span>
<span style="top:793.3px;line-height:16px;left:763px;letter-spacing:-0.26px;transform:scaleX(0.8916);transform-origin:0 0;">1 KB</span>
<span style="top:793.3px;line-height:16px;left:800px;letter-spacing:-0.24px;">9/25/2020 11:34:01 AM</span>
<span style="top:793.3px;line-height:16px;left:950px;letter-spacing:0.54px;">rw-r--r--</span>
<span style="top:793.3px;line-height:16px;left:1029.5px;letter-spacing:0.08px;">admin</span>
<svg style="left:371px;top:811px" width="13" height="16" viewBox="0 0 13 16"><path d="M.5.5h8l3 3v12h-11z" fill="#fff" stroke="#9b9b9b"/><path d="M8.5.5v3h3" fill="#f4f4f4" stroke="#9b9b9b"/></svg>
<span style="top:812.3px;line-height:16px;left:387px;letter-spacing:-0.34px;">passwd</span>
<span style="top:812.3px;line-height:16px;left:763px;letter-spacing:-0.26px;transform:scaleX(0.8916);transform-origin:0 0;">1 KB</span>
<span style="top:812.3px;line-height:16px;left:800px;letter-spacing:-0.26px;">6/25/2020 9:54:49 AM</span>
<span style="top:812.3px;line-height:16px;left:950px;letter-spacing:0.79px;">rw-------</span>
<span style="top:812.3px;line-height:16px;left:1029.5px;letter-spacing:0.08px;">admin</span>
<svg style="left:371px;top:830px" width="13" height="16" viewBox="0 0 13 16"><path d="M.5.5h8l3 3v12h-11z" fill="#fff" stroke="#9b9b9b"/><path d="M8.5.5v3h3" fill="#f4f4f4" stroke="#9b9b9b"/></svg>
<span style="top:831.3px;line-height:16px;left:387px;letter-spacing:0.04px;">xstartup</span>
<span style="top:831.3px;line-height:16px;left:763px;letter-spacing:-0.26px;transform:scaleX(0.8916);transform-origin:0 0;">1 KB</span>
<span style="top:831.3px;line-height:16px;left:800px;letter-spacing:-0.26px;">6/25/2020 9:54:52 AM</span>
<span style="top:831.3px;line-height:16px;left:950px;letter-spacing:0.17px;">rwxr-xr-x</span>
<span style="top:831.3px;line-height:16px;left:1029.5px;letter-spacing:0.08px;">admin</span>
<span style="top:1046.8px;line-height:16px;left:366px;letter-spacing:-0.36px;">329 B of 20.1 KB in 1 of 10</span>
<div style="left:0px;top:1064px;width:1600px;height:1px;background:#a3a3a3;"></div>
<div style="left:0px;top:1065px;width:1600px;height:2px;background:#f6f6f6;"></div>
<div style="left:0px;top:1068px;width:1600px;height:21px;background:#bfcddb;"></div>
<span style="top:1070.8px;line-height:16px;left:5px;letter-spacing:-0.26px;">Queue</span>
<div style="left:2px;top:1091px;width:23px;height:22px;background:#e5f1fb;border:1px solid #3c96f0;box-sizing:border-box;"></div>
<svg style="left:5px;top:1094px" width="16" height="16" viewBox="0 0 16 16"><path d="M6.5 0.5h5l3 3v7h-8z" fill="#fff" stroke="#5f82b8"/><path d="M11.5 0.5v3h3" fill="none" stroke="#5f82b8" stroke-width=".7"/><path d="M3.5 2.5h5l3 3v7h-8z" fill="#fff" stroke="#5f82b8"/><path d="M8.5 2.5v3h3" fill="none" stroke="#5f82b8" stroke-width=".7"/><path d="M0.5 4.5h6l3 3v8h-9z" fill="#fff" stroke="#5f82b8"/><path d="M6.5 4.5v3h3" fill="none" stroke="#5f82b8" stroke-width=".7"/><path d="M2.5 8.5h5M2.5 10.5h5M2.5 12.5h5" stroke="#7c9fd3" fill="none"/><path d="M8 7.500l7 4-7 4z" fill="#3fb63a" stroke="#1b7f1d" stroke-width=".8"/></svg>
<div style="left:28px;top:1091px;width:1px;height:22px;background:#b4b4b4;"></div>
<svg style="left:34px;top:1094px" width="16" height="16" viewBox="0 0 16 16"><path d="M2.500 1.500l11 6.500-11 6.500z" fill="#d0d0d0" stroke="#bdbdbd"/></svg>
<svg style="left:57px;top:1094px" width="16" height="16" viewBox="0 0 16 16"><path d="M2.800 1.300L8 6.200l5.200-4.900 1.900 1.900L10 8l5.100 4.800-1.900 1.900L8 9.800l-5.200 4.900-1.900-1.900L6 8 .9 3.200z" fill="#b9b9b9" stroke="#b0b0b0" stroke-width=".9"/></svg>
<div style="left:80px;top:1091px;width:1px;height:22px;background:#b4b4b4;"></div>
<svg style="left:86px;top:1094px" width="16" height="16" viewBox="0 0 16 16"><path d="M8 .8l5 6.200h-3v8.200H6V7H3z" fill="#d0d0d0" stroke="#bdbdbd" stroke-width=".8"/></svg>
<svg style="left:109px;top:1094px" width="16" height="16" viewBox="0 0 16 16"><path d="M8 15.200l5-6.200h-3V.8H6V9H3z" fill="#d0d0d0" stroke="#bdbdbd" stroke-width=".8"/></svg>
<div style="left:132px;top:1091px;width:1px;height:22px;background:#b4b4b4;"></div>
<svg style="left:138px;top:1094px" width="16" height="16" viewBox="0 0 16 16"><path d="M6.5 0.5h5l3 3v7h-8z" fill="#e9e9e9" stroke="#c4c4c4"/><path d="M11.5 0.5v3h3" fill="none" stroke="#c4c4c4" stroke-width=".7"/><path d="M3.5 2.5h5l3 3v7h-8z" fill="#e9e9e9" stroke="#c4c4c4"/><path d="M8.5 2.5v3h3" fill="none" stroke="#c4c4c4" stroke-width=".7"/><path d="M0.5 4.5h6l3 3v8h-9z" fill="#e9e9e9" stroke="#c4c4c4"/><path d="M6.5 4.5v3h3" fill="none" stroke="#c4c4c4" stroke-width=".7"/><path d="M2.5 8.5h5M2.5 10.5h5M2.5 12.5h5" stroke="#cfcfcf" fill="none"/><circle cx="11.500" cy="11.500" r="3.500" fill="#d0d0d0" stroke="#bdbdbd"/></svg>
<svg style="left:160px;top:1101px" width="7" height="4" viewBox="0 0 7 4"><path d="M.7 .4h5.600L3.500 3.300z" fill="#b0b0b0"/></svg>
<svg style="left:173px;top:1094px" width="16" height="16" viewBox="0 0 16 16"><path d="M6.800.8h2.400l.4 2 1.300.6 1.700-1.200 1.700 1.700-1.200 1.700.6 1.300 2 .4v2.400l-2 .4-.6 1.300 1.200 1.700-1.700 1.700-1.700-1.200-1.300.6-.4 2H6.800l-.4-2-1.300-.6-1.700 1.200-1.700-1.700 1.200-1.700-.6-1.300-2-.4V6.800l2-.4.6-1.300L1.700 3.400l1.700-1.700 1.700 1.200 1.300-.6z" fill="#adb6c1" stroke="#59636f" stroke-width=".9"/><circle cx="8" cy="8" r="1.900" fill="#f0f0f0" stroke="#6d7580" stroke-width=".9"/></svg>
<div style="left:0px;top:1115px;width:1600px;height:23px;background:#fff;border:1px solid #828790;box-sizing:border-box;"></div>
<div style="left:71px;top:1117px;width:1px;height:19px;background:#e5e5e5;"></div>
<div style="left:321px;top:1117px;width:1px;height:19px;background:#e5e5e5;"></div>
<div style="left:571px;top:1117px;width:1px;height:19px;background:#e5e5e5;"></div>
<div style="left:651px;top:1117px;width:1px;height:19px;background:#e5e5e5;"></div>
<div style="left:762px;top:1117px;width:1px;height:19px;background:#e5e5e5;"></div>
<div style="left:842px;top:1117px;width:1px;height:19px;background:#e5e5e5;"></div>
<div style="left:942px;top:1117px;width:1px;height:19px;background:#e5e5e5;"></div>
<span style="top:1120.8px;line-height:16px;left:8px;letter-spacing:0.04px;">Operation</span>
<span style="top:1120.8px;line-height:16px;left:78px;letter-spacing:-0.41px;">Source</span>
<span style="top:1120.8px;line-height:16px;left:328px;">Destination</span>
<span style="top:1120.8px;line-height:16px;left:588px;letter-spacing:-0.36px;">Transferred</span>
<span style="top:1120.8px;line-height:16px;left:731px;letter-spacing:-0.08px;">Time</span>
<span style="top:1120.8px;line-height:16px;left:805px;letter-spacing:-0.26px;transform:scaleX(0.9506);transform-origin:0 0;">Speed</span>
<span style="top:1120.8px;line-height:16px;left:870px;letter-spacing:-0.43px;">Progress</span>
<div style="left:1377px;top:1141px;width:1px;height:18px;background:#dedede;"></div>
<div style="left:1380px;top:1141px;width:1px;height:18px;background:#dedede;"></div>
<div style="left:1412px;top:1141px;width:1px;height:18px;background:#dedede;"></div>
<div style="left:1415px;top:1141px;width:1px;height:18px;background:#dedede;"></div>
<div style="left:1482px;top:1141px;width:1px;height:18px;background:#dedede;"></div>
<div style="left:1485px;top:1141px;width:1px;height:18px;background:#dedede;"></div>
<div style="left:1517px;top:1141px;width:1px;height:18px;background:#dedede;"></div>
<div style="left:1520px;top:1141px;width:1px;height:18px;background:#dedede;"></div>
<div style="left:1597px;top:1141px;width:1px;height:18px;background:#dedede;"></div>
<svg style="left:1387px;top:1142px" width="16" height="16" viewBox="0 0 16 16"><path d="M4.500 7V4.500q0-3 3.500-3t3.500 3V7" fill="none" stroke="#b98a0e" stroke-width="1.600"/><rect x="2" y="6.500" width="12" height="9" rx="1" fill="#f5c131" stroke="#b98a0e"/><rect x="7.300" y="9.500" width="1.400" height="3" fill="#5a4306"/></svg>
<span style="top:1141.8px;line-height:16px;left:1438px;letter-spacing:-0.37px;transform:scaleX(0.8769);transform-origin:0 0;">SCP</span>
<svg style="left:1493px;top:1141px" width="16" height="16" viewBox="0 0 16 16"><rect x="1.500" y=".8" width="10" height="8" fill="#d5d5d5" stroke="#b5b5b5"/><rect x="4.500" y="3.500" width="10" height="8" fill="#dedede" stroke="#b5b5b5"/><path d="M9.500 11.500v3M6 15h7" stroke="#b0b0b0" stroke-width="1.300"/></svg>
<span style="top:1141.8px;line-height:16px;left:1541px;letter-spacing:-0.2px;transform:scaleX(0.9267);transform-origin:0 0;">0:22:55</span>
<div style="left:0px;top:1139px;width:1600px;height:1px;background:#fff;"></div>
<div style="left:0px;top:1160px;width:1600px;height:4px;background:#2a2522;"></div>
<div style="left:1238px;top:1160px;width:44px;height:4px;background:#6b6764;"></div>
<span style="top:1058.6px;line-height:27px;left:1295px;font-size:20px;color:rgba(125,125,125,.42);letter-spacing:-0.06px;">Activate Windows</span>
<span style="top:1084.8px;line-height:20px;left:1295px;font-size:15px;color:rgba(125,125,125,.45);letter-spacing:-0.02px;">Go to Settings to activate Windows.</span>
<div style="left:491px;top:670px;width:187px;height:229px;background:#fdfdfd;border:1px solid #979797;box-sizing:border-box;box-shadow:2px 2px 3px rgba(0,0,0,.3);"></div>
<div style="left:492px;top:671px;width:24px;height:227px;background:#f1f1f1;"></div>
<div style="left:677px;top:694px;width:211px;height:123px;background:#fdfdfd;border:1px solid #979797;box-sizing:border-box;box-shadow:2px 2px 3px rgba(0,0,0,.3);"></div>
<div style="left:678px;top:695px;width:24px;height:121px;background:#f1f1f1;"></div>
<div style="left:493px;top:694px;width:184px;height:22px;background:#c2dcf5;border:1px solid #4ea3f5;box-sizing:border-box;"></div>
<div style="left:662px;top:695px;width:1px;height:20px;background:#4ea3f5;"></div>
<svg style="left:496px;top:675px" width="16" height="16" viewBox="0 0 16 16"><path d="M6.500 .5h5l3 3v6h-8z" fill="#fff" stroke="#6b89b8"/><path d="M.8 14.500V5.500q0-.8.8-.8h3.500l1.200 1.300h5.300q.7 0 .7.800V8" fill="#f5c73a" stroke="#b8860b"/><path d="M.8 14.500L3 8.500h12.500l-2.300 6z" fill="#ffe680" stroke="#b8860b"/></svg>
<span style="top:674.6px;line-height:16px;left:523px;letter-spacing:-0.45px;">Open</span>
<svg style="left:496px;top:697px" width="16" height="16" viewBox="0 0 16 16"><path d="M.5 1.500h8l3.500 3.500v10.500h-11.500z" fill="#f7fafe" stroke="#6b89b8"/><path d="M6.33 13.21L13.88 5.27L11.99 3.48L4.45 11.42z" fill="#f8d043" stroke="#c39a1f" stroke-width=".5"/><path d="M3.60 14.20L6.33 13.21L4.45 11.42z" fill="#f0d9a8" stroke="#c39a1f" stroke-width=".3"/><path d="M3.60 14.20L4.75 13.78L3.96 13.03z" fill="#3a3a3a"/><path d="M13.88 5.27L14.57 4.55L12.68 2.75L11.99 3.48z" fill="#c9ced6"/><path d="M14.57 4.55L15.94 3.10L14.06 1.30L12.68 2.75z" fill="#e03a3a"/></svg>
<span style="top:696.6px;line-height:16px;left:523px;font-weight:bold;letter-spacing:-0.23px;transform:scaleX(0.9549);transform-origin:0 0;">Edit</span>
<svg style="left:666px;top:702px" width="4" height="7" viewBox="0 0 4 7"><path d="M0 0l4 3.500-4 3.500z" fill="#000"/></svg>
<svg style="left:496px;top:719px" width="16" height="16" viewBox="0 0 16 16"><path d="M5.5 0.5h6l3 3v7h-9z" fill="#fff" stroke="#4e78b5"/><path d="M11.5 0.5v3h3" fill="none" stroke="#4e78b5" stroke-width=".7"/><path d="M7.5 4.5h5M7.5 6.5h5M7.5 8.5h5" stroke="#6d93c9" fill="none"/><path d="M0.5 4.5h6l3 3v8h-9z" fill="#fff" stroke="#4e78b5"/><path d="M6.5 4.5v3h3" fill="none" stroke="#4e78b5" stroke-width=".7"/><path d="M2.5 8.5h5M2.5 10.5h5M2.5 12.5h5" stroke="#6d93c9" fill="none"/><path d="M8.500 15.500v-5.500l1.700 1.700 3-3 2.300 2.300-3 3 1.700 1.500z" fill="#3fb63a" stroke="#1b7f1d" stroke-width=".8" stroke-linejoin="round"/></svg>
<span style="top:718.6px;line-height:16px;left:523px;letter-spacing:-0.04px;">Download...</span>
<span style="top:718.6px;line-height:16px;left:648px;letter-spacing:-0.42px;transform:scaleX(0.8827);transform-origin:0 0;">F5</span>
<svg style="left:666px;top:724px" width="4" height="7" viewBox="0 0 4 7"><path d="M0 0l4 3.500-4 3.500z" fill="#000"/></svg>
<svg style="left:496px;top:741px" width="16" height="16" viewBox="0 0 16 16"><path d="M0.5 0.5h6l3 3v7h-9z" fill="#fff" stroke="#5f82b8"/><path d="M6.5 0.5v3h3" fill="none" stroke="#5f82b8" stroke-width=".7"/><path d="M2.5 4.5h5M2.5 6.5h5M2.5 8.5h5" stroke="#7c9fd3" fill="none"/><path d="M6.5 5.5h6l3 3v7h-9z" fill="#fff" stroke="#5f82b8"/><path d="M12.5 5.5v3h3" fill="none" stroke="#5f82b8" stroke-width=".7"/><path d="M8.5 9.5h5M8.5 11.5h5M8.5 13.5h5" stroke="#7c9fd3" fill="none"/><path d="M.5 9.200h5V6.800l4.500 3.900-4.500 3.900v-2.400h-5z" fill="#f7c32e" stroke="#b98a0e" stroke-width=".8"/></svg>
<span style="top:740.6px;line-height:16px;left:523px;letter-spacing:-0.09px;">Duplicate...</span>
<span style="top:740.6px;line-height:16px;left:616px;letter-spacing:-0.15px;">Shift+F5</span>
<svg style="left:496px;top:763px" width="16" height="16" viewBox="0 0 16 16"><path d="M0.5 0.5h6l3 3v7h-9z" fill="#fff" stroke="#5f82b8"/><path d="M6.5 0.5v3h3" fill="none" stroke="#5f82b8" stroke-width=".7"/><path d="M2.5 4.5h5M2.5 6.5h5M2.5 8.5h5" stroke="#7c9fd3" fill="none"/><path d="M6.5 5.5h6l3 3v7h-9z" fill="#fff" stroke="#5f82b8"/><path d="M12.5 5.5v3h3" fill="none" stroke="#5f82b8" stroke-width=".7"/><path d="M8.5 9.5h5M8.5 11.5h5M8.5 13.5h5" stroke="#7c9fd3" fill="none"/><path d="M.5 9.200h5V6.800l4.500 3.900-4.500 3.900v-2.400h-5z" fill="#f7c32e" stroke="#b98a0e" stroke-width=".8"/></svg>
<span style="top:762.6px;line-height:16px;left:523px;letter-spacing:-0.13px;">Move To...</span>
<span style="top:762.6px;line-height:16px;left:616px;letter-spacing:-0.15px;">Shift+F6</span>
<svg style="left:496px;top:785px" width="16" height="16" viewBox="0 0 16 16"><path d="M2.800 1.300L8 6.200l5.200-4.900 1.900 1.900L10 8l5.100 4.800-1.900 1.900L8 9.800l-5.200 4.900-1.900-1.900L6 8 .9 3.200z" fill="#dc2828" stroke="#a81212" stroke-width=".7"/></svg>
<span style="top:784.6px;line-height:16px;left:523px;letter-spacing:-0.34px;">Delete</span>
<span style="top:784.6px;line-height:16px;left:648px;letter-spacing:-0.42px;transform:scaleX(0.8827);transform-origin:0 0;">F8</span>
<svg style="left:496px;top:807px" width="16" height="16" viewBox="0 0 16 16"><rect x=".5" y="9.500" width="15" height="6" fill="#eef4fc" stroke="#5a82bf"/><path d="M2.500 11l2.500 3.500M5 11l-2.500 3.500" stroke="#3a5fa0" stroke-width=".9"/><path d="M9.52 11.69L13.26 4.02L11.11 2.97L7.36 10.64z" fill="#f8d043" stroke="#c39a1f" stroke-width=".5"/><path d="M7.30 13.50L9.52 11.69L7.36 10.64z" fill="#f0d9a8" stroke="#c39a1f" stroke-width=".3"/><path d="M7.30 13.50L8.24 12.73L7.33 12.29z" fill="#3a3a3a"/><path d="M13.26 4.02L13.70 3.12L11.54 2.07L11.11 2.97z" fill="#c9ced6"/><path d="M13.70 3.12L14.58 1.33L12.42 0.27L11.54 2.07z" fill="#e03a3a"/></svg>
<span style="top:806.6px;line-height:16px;left:523px;letter-spacing:-0.47px;">Rename</span>
<span style="top:806.6px;line-height:16px;left:648px;letter-spacing:-0.42px;transform:scaleX(0.8827);transform-origin:0 0;">F2</span>
<div style="left:662px;top:717px;width:1px;height:20px;background:#c5c5c5;"></div>
<div style="left:523px;top:827px;width:154px;height:1px;background:#bdbdbd;"></div>
<span style="top:831.6px;line-height:16px;left:523px;letter-spacing:-0.04px;">File Custom Commands</span>
<svg style="left:666px;top:837px" width="4" height="7" viewBox="0 0 4 7"><path d="M0 0l4 3.500-4 3.500z" fill="#000"/></svg>
<span style="top:853.6px;line-height:16px;left:523px;letter-spacing:-0.3px;">File Names</span>
<svg style="left:666px;top:859px" width="4" height="7" viewBox="0 0 4 7"><path d="M0 0l4 3.500-4 3.500z" fill="#000"/></svg>
<div style="left:523px;top:874px;width:154px;height:1px;background:#bdbdbd;"></div>
<svg style="left:496px;top:879px" width="16" height="16" viewBox="0 0 16 16"><path d="M0.5 0.5h7l3 3v9h-10z" fill="#fff" stroke="#6b89b8"/><path d="M7.5 0.5v3h3" fill="none" stroke="#6b89b8" stroke-width=".7"/><rect x="7.500" y="7.500" width="8" height="8" fill="#f4f8fd" stroke="#6b89b8"/><path d="M9.300 11.500l1.700 2 3-4" fill="none" stroke="#2fa52c" stroke-width="1.600"/></svg>
<span style="top:878.5px;line-height:16px;left:523px;letter-spacing:-0.19px;">Properties</span>
<span style="top:878.5px;line-height:16px;left:648px;letter-spacing:-0.42px;transform:scaleX(0.8827);transform-origin:0 0;">F9</span>
<svg style="left:682px;top:698px" width="16" height="16" viewBox="0 0 16 16"><path d="M.5 1.500h8l3.500 3.500v10.500h-11.500z" fill="#f7fafe" stroke="#6b89b8"/><path d="M6.33 13.21L13.88 5.27L11.99 3.48L4.45 11.42z" fill="#f8d043" stroke="#c39a1f" stroke-width=".5"/><path d="M3.60 14.20L6.33 13.21L4.45 11.42z" fill="#f0d9a8" stroke="#c39a1f" stroke-width=".3"/><path d="M3.60 14.20L4.75 13.78L3.96 13.03z" fill="#3a3a3a"/><path d="M13.88 5.27L14.57 4.55L12.68 2.75L11.99 3.48z" fill="#c9ced6"/><path d="M14.57 4.55L15.94 3.10L14.06 1.30L12.68 2.75z" fill="#e03a3a"/></svg>
<span style="top:698.4px;line-height:16px;left:709px;letter-spacing:-0.23px;">Edit</span>
<div style="left:709px;top:719px;width:178px;height:1px;background:#bdbdbd;"></div>
<span style="top:723.8px;line-height:16px;left:709px;letter-spacing:0.04px;">Internal editor</span>
<span style="top:723.8px;line-height:16px;left:808px;letter-spacing:0.13px;">Ctrl+Alt+F4</span>
<div style="left:709px;top:745px;width:178px;height:1px;background:#bdbdbd;"></div>
<span style="top:748.8px;line-height:16px;left:709px;letter-spacing:0.1px;">Notepad</span>
<span style="top:770.7px;line-height:16px;left:709px;letter-spacing:-0.09px;">Edit With...</span>
<div style="left:709px;top:792px;width:178px;height:1px;background:#bdbdbd;"></div>
<svg style="left:682px;top:796px" width="16" height="16" viewBox="0 0 16 16"><path d="M6.800.8h2.400l.4 2 1.300.6 1.700-1.200 1.700 1.700-1.200 1.700.6 1.300 2 .4v2.400l-2 .4-.6 1.300 1.200 1.700-1.700 1.700-1.700-1.200-1.300.6-.4 2H6.800l-.4-2-1.300-.6-1.700 1.200-1.700-1.700 1.200-1.700-.6-1.300-2-.4V6.800l2-.4.6-1.300L1.700 3.400l1.700-1.700 1.700 1.200 1.300-.6z" fill="#adb6c1" stroke="#59636f" stroke-width=".9"/><circle cx="8" cy="8" r="1.900" fill="#f0f0f0" stroke="#6d7580" stroke-width=".9"/></svg>
<span style="top:795.7px;line-height:16px;left:709px;">Configure...</span>
<svg style="left:514px;top:702px" width="13" height="20" viewBox="0 0 13 20"><path d="M.5 .5v16l3.700-3.600 2.500 6 2.300-1-2.500-5.800H11.800z" fill="#fff" stroke="#000"/></svg>
</body></html>
